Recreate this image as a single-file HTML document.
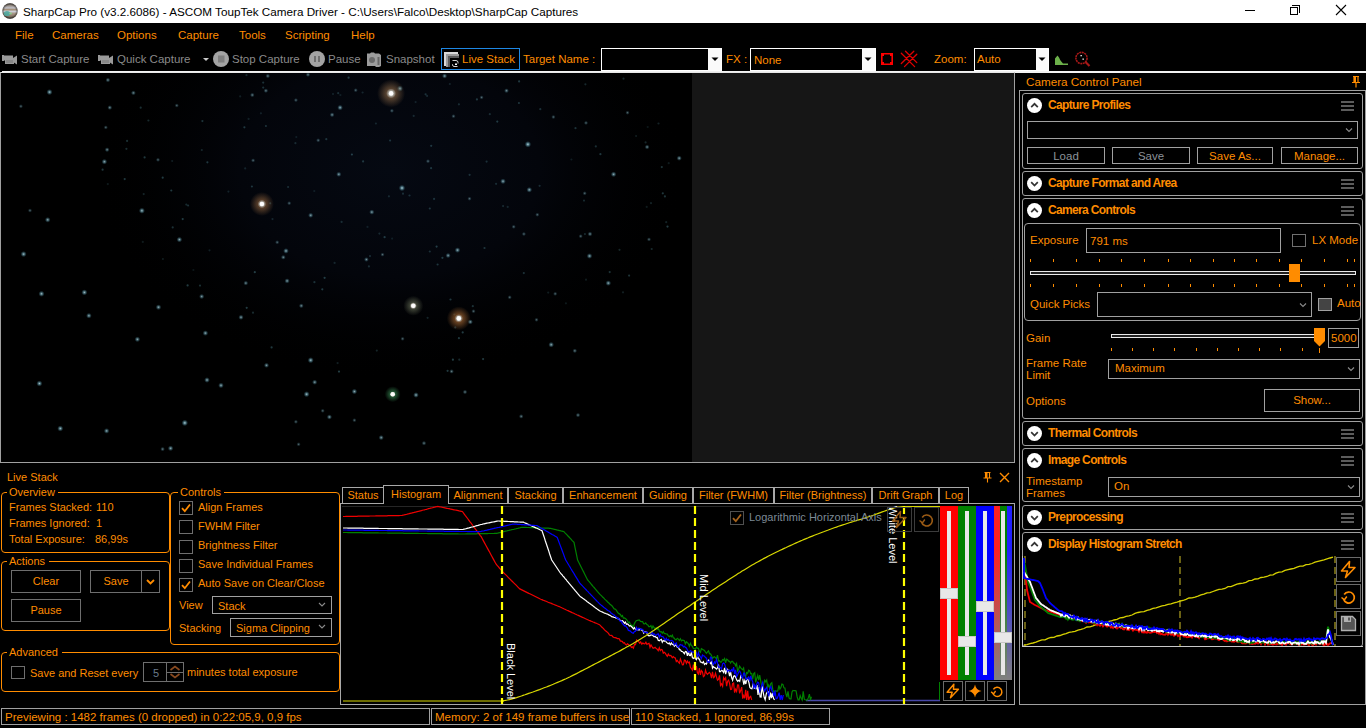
<!DOCTYPE html>
<html><head><meta charset="utf-8">
<style>
*{box-sizing:border-box;margin:0;padding:0}
html,body{width:1366px;height:728px;overflow:hidden;background:#000}
body{position:relative;font-family:"Liberation Sans",sans-serif;font-size:12px;color:#ff8c00}
.a{position:absolute}
.t{position:absolute;white-space:nowrap;line-height:14px;font-size:11.5px}
.g{color:#8a8a8a}
.bx{position:absolute;border:1px solid #a0a0a0}
.ob{position:absolute;border:1px solid #ff8c00;border-radius:4px}
.sec{position:absolute;border:1px solid #a0a0a0;border-radius:3px;left:1022px;width:341px}
.hd{position:absolute;font-weight:bold;font-size:12px;letter-spacing:-0.65px;line-height:14px;white-space:nowrap}
.circ{position:absolute;width:15px;height:15px;border-radius:50%;background:#fff}
.ham{position:absolute;width:13px;height:10px;border-top:2px solid #5c5c5c;border-bottom:2px solid #5c5c5c}
.ham:after{content:"";position:absolute;left:0;right:0;top:2px;height:2px;background:#5c5c5c}
.cb{position:absolute;width:14px;height:14px;border:1px solid #6e6e6e}
.btn{position:absolute;border:1px solid #a0a0a0;text-align:center;line-height:15px;font-size:11.5px}
.gbtn{position:absolute;border:1px solid #6e6e6e;text-align:center;font-size:12px}
.tab{position:absolute;top:487px;height:17px;border:1px solid #a0a0a0;border-bottom:none;text-align:center;line-height:15px;font-size:12px;white-space:nowrap}
</style></head>
<body>
<!-- title bar -->
<div class="a" style="left:0;top:0;width:1366px;height:23px;background:#fff"></div>
<svg class="a" style="left:2px;top:3px" width="16" height="16" viewBox="0 0 16 16"><defs><linearGradient id="jb" x1="0" y1="0" x2="0" y2="1"><stop offset="0" stop-color="#6a625a"/><stop offset="0.15" stop-color="#9a9088"/><stop offset="0.3" stop-color="#c0c0c8"/><stop offset="0.42" stop-color="#a08a70"/><stop offset="0.52" stop-color="#d0d4e0"/><stop offset="0.66" stop-color="#a89888"/><stop offset="0.8" stop-color="#908070"/><stop offset="1" stop-color="#5a5048"/></linearGradient><radialGradient id="je" cx="0.5" cy="0.5" r="0.5"><stop offset="0.7" stop-color="#000" stop-opacity="0"/><stop offset="1" stop-color="#000" stop-opacity="0.55"/></radialGradient></defs><circle cx="8" cy="8" r="7.7" fill="url(#jb)"/><circle cx="8" cy="8" r="7.7" fill="url(#je)"/><ellipse cx="5" cy="10.5" rx="3.2" ry="2.6" fill="#4aa8a0" opacity="0.85"/><ellipse cx="8.5" cy="10.5" rx="1.5" ry="1" fill="#8ad890" opacity="0.8"/></svg>
<div class="t" style="left:23px;top:5px;color:#000;font-size:11.7px">SharpCap Pro (v3.2.6086) - ASCOM ToupTek Camera Driver - C:\Users\Falco\Desktop\SharpCap Captures</div>
<div class="a" style="left:1245px;top:10px;width:10px;height:1px;background:#000"></div>
<div class="a" style="left:1292px;top:5px;width:8px;height:8px;border:1px solid #000;border-left:none;border-bottom:none"></div>
<div class="a" style="left:1290px;top:7px;width:8px;height:8px;border:1px solid #000;background:#fff"></div>
<svg class="a" style="left:1335px;top:4px" width="12" height="12"><path d="M1 1L11 11M11 1L1 11" stroke="#000" stroke-width="1.1"/></svg>

<!-- menu -->
<div class="t" style="left:15px;top:28px">File</div>
<div class="t" style="left:52px;top:28px">Cameras</div>
<div class="t" style="left:117px;top:28px">Options</div>
<div class="t" style="left:178px;top:28px">Capture</div>
<div class="t" style="left:239px;top:28px">Tools</div>
<div class="t" style="left:285px;top:28px">Scripting</div>
<div class="t" style="left:351px;top:28px">Help</div>

<!-- toolbar -->

<svg class="a" style="left:2px;top:54px" width="16" height="11" viewBox="0 0 16 11"><path d="M0 1h2v0.5h9v5h-9v0.5h-2z" fill="#9a9a9a"/><rect x="3" y="5" width="9" height="5" fill="#9a9a9a"/><rect x="4" y="6" width="7" height="3" fill="#888"/><path d="M11 4l4-2.5v9l-4-2.5z" fill="#9a9a9a"/></svg>
<div class="t g" style="left:21px;top:52px">Start Capture</div>
<svg class="a" style="left:98px;top:54px" width="16" height="11" viewBox="0 0 16 11"><path d="M0 1h2v0.5h9v5h-9v0.5h-2z" fill="#9a9a9a"/><rect x="3" y="5" width="9" height="5" fill="#9a9a9a"/><rect x="4" y="6" width="7" height="3" fill="#888"/><path d="M11 4l4-2.5v9l-4-2.5z" fill="#9a9a9a"/></svg>
<div class="t g" style="left:117px;top:52px">Quick Capture</div>
<svg class="a" style="left:202px;top:57px" width="8" height="5"><path d="M1 1h6l-3 3z" fill="#c8c8c8"/></svg>
<svg class="a" style="left:213px;top:51px" width="16" height="16"><circle cx="8" cy="8" r="8" fill="#a3a3a3"/><rect x="5" y="4.5" width="6.5" height="7" fill="#7e7e7e"/></svg>
<div class="t g" style="left:232px;top:52px">Stop Capture</div>
<svg class="a" style="left:309px;top:51px" width="16" height="16"><circle cx="8" cy="8" r="8" fill="#a3a3a3"/><rect x="5" y="5" width="2" height="6" fill="#6e6e6e"/><rect x="9" y="5" width="2" height="6" fill="#6e6e6e"/></svg>
<div class="t g" style="left:328px;top:52px">Pause</div>
<svg class="a" style="left:367px;top:52px" width="15" height="15" viewBox="0 0 15 15"><path d="M0 1.5h3l1-1h3l1 1h4l2 1.5v11l-2 1h-3l-1-1h-8z" fill="#9c9c9c"/><circle cx="5" cy="8" r="3" fill="#6a6a6a"/><rect x="10.5" y="5" width="2" height="8" fill="#666"/></svg>
<div class="t g" style="left:386px;top:52px">Snapshot</div>
<div class="a" style="left:441px;top:48px;width:79px;height:22px;border:1px solid #1e88e5"></div>
<svg class="a" style="left:444px;top:52px" width="16" height="16"><path d="M0 0h14v2h-12v12h-2z" fill="#d8d8d8"/><path d="M2 2h13v2h-11v11h-2z" fill="#9a9a9a"/><path d="M4 4h11v2h-9v9h-2z" fill="#5a5a5a"/><path d="M8.5 8.5H12Q14 8.5 14 10.5V11.5" stroke="#d0d0d0" fill="none" stroke-width="1"/><path d="M13.5 14.5H10Q8.5 14.5 8.5 12.5V12" stroke="#d0d0d0" fill="none" stroke-width="1"/><rect x="11" y="11.5" width="2" height="1.5" fill="#fff"/></svg>
<div class="t" style="left:462px;top:52px">Live Stack</div>
<div class="t" style="left:523px;top:52px">Target Name :</div>
<div class="a" style="left:601px;top:48px;width:121px;height:23px;background:#fafafa;border:1px solid #fff"></div>
<div class="a" style="left:602px;top:49px;width:106px;height:21px;background:#000"></div>
<svg class="a" style="left:711px;top:57px" width="9" height="5"><path d="M0.5 0.5h7l-3.5 3.5z" fill="#000"/></svg>
<div class="t" style="left:726px;top:52px">FX :</div>
<div class="a" style="left:750px;top:48px;width:126px;height:23px;background:#fafafa;border:1px solid #fff"></div>
<div class="a" style="left:751px;top:49px;width:111px;height:21px;background:#000"></div>
<div class="t" style="left:754px;top:53px">None</div>
<svg class="a" style="left:864px;top:57px" width="9" height="5"><path d="M0.5 0.5h7l-3.5 3.5z" fill="#000"/></svg>
<svg class="a" style="left:880px;top:52px" width="14" height="14" viewBox="0 0 14 14"><path d="M1.8 1.8h10.4v10.4h-10.4z" fill="none" stroke="#f00" stroke-width="1.6"/><rect x="2" y="2" width="2" height="2" fill="#f00"/><rect x="10" y="2" width="2" height="2" fill="#f00"/><rect x="2" y="10" width="2" height="2" fill="#f00"/><rect x="10" y="10" width="2" height="2" fill="#f00"/></svg>
<svg class="a" style="left:899px;top:50px" width="20" height="18" viewBox="899 50 20 18"><path d="M901.3 53.3L914.6 66.6M905.5 51.3L916.8 62.6M913.8 51.3L901.3 63.5M916.8 54.3L904.5 66.6" stroke="#e00000" stroke-width="1.3" stroke-linecap="round"/></svg>
<div class="t" style="left:934px;top:52px">Zoom:</div>
<div class="a" style="left:974px;top:48px;width:75px;height:23px;background:#fafafa;border:1px solid #fff"></div>
<div class="a" style="left:975px;top:49px;width:61px;height:21px;background:#000"></div>
<div class="t" style="left:977px;top:52px">Auto</div>
<svg class="a" style="left:1038px;top:57px" width="9" height="5"><path d="M0.5 0.5h7l-3.5 3.5z" fill="#000"/></svg>
<svg class="a" style="left:1054px;top:54px" width="15" height="12" viewBox="0 0 15 12"><path d="M1 11V4.5L3.5 1.5L5 3.5L6.5 6.5L9 9.5H14V11z" fill="#6cb04a"/></svg>
<svg class="a" style="left:1074px;top:51px" width="18" height="17" viewBox="0 0 18 17"><circle cx="7.5" cy="7" r="5.6" fill="none" stroke="#a81818" stroke-width="1.6" stroke-dasharray="2 0.6"/><path d="M11.5 11L15.5 15" stroke="#a81818" stroke-width="2.2"/><rect x="6.5" y="4" width="1.3" height="1.3" fill="#fff"/><rect x="8.5" y="7.5" width="1.3" height="1.3" fill="#fff"/></svg>


<!-- white line -->
<div class="a" style="left:2px;top:71px;width:1364px;height:2px;background:#f2f2f2"></div>

<!-- image area -->
<div class="a" style="left:0;top:72px;width:1015px;height:391px;border-top:1px solid #e8e8e8;border-left:1px solid #a0a0a0;border-right:1px solid #a0a0a0;border-bottom:1px solid #a0a0a0;background:#161616"></div>
<svg class="a" style="left:1px;top:73px" width="691" height="389" viewBox="1 73 691 389"><defs><radialGradient id="hz"><stop offset="0" stop-color="#050912"/><stop offset="0.5" stop-color="#03050b"/><stop offset="1" stop-color="#000" stop-opacity="0"/></radialGradient><radialGradient id="h0"><stop offset="0" stop-color="#fff" stop-opacity="1"/><stop offset="0.2" stop-color="#e8e0d0" stop-opacity="0.7"/><stop offset="0.35" stop-color="#6a5038" stop-opacity="0.8"/><stop offset="0.7" stop-color="#6a5038" stop-opacity="0.35"/><stop offset="1" stop-color="#6a5038" stop-opacity="0"/></radialGradient><radialGradient id="h1"><stop offset="0" stop-color="#fff" stop-opacity="1"/><stop offset="0.2" stop-color="#e8e0d0" stop-opacity="0.7"/><stop offset="0.35" stop-color="#6a4a30" stop-opacity="0.8"/><stop offset="0.7" stop-color="#6a4a30" stop-opacity="0.35"/><stop offset="1" stop-color="#6a4a30" stop-opacity="0"/></radialGradient><radialGradient id="h2"><stop offset="0" stop-color="#fff" stop-opacity="1"/><stop offset="0.2" stop-color="#e8e0d0" stop-opacity="0.7"/><stop offset="0.35" stop-color="#4a5040" stop-opacity="0.8"/><stop offset="0.7" stop-color="#4a5040" stop-opacity="0.35"/><stop offset="1" stop-color="#4a5040" stop-opacity="0"/></radialGradient><radialGradient id="h3"><stop offset="0" stop-color="#fff" stop-opacity="1"/><stop offset="0.2" stop-color="#e8e0d0" stop-opacity="0.7"/><stop offset="0.35" stop-color="#805028" stop-opacity="0.8"/><stop offset="0.7" stop-color="#805028" stop-opacity="0.35"/><stop offset="1" stop-color="#805028" stop-opacity="0"/></radialGradient><radialGradient id="h4"><stop offset="0" stop-color="#fff" stop-opacity="1"/><stop offset="0.2" stop-color="#e8e0d0" stop-opacity="0.7"/><stop offset="0.35" stop-color="#2a6a40" stop-opacity="0.8"/><stop offset="0.7" stop-color="#2a6a40" stop-opacity="0.35"/><stop offset="1" stop-color="#2a6a40" stop-opacity="0"/></radialGradient><radialGradient id="st"><stop offset="0" stop-color="#c8e8f0"/><stop offset="0.4" stop-color="#70a8b8" stop-opacity="0.7"/><stop offset="1" stop-color="#306878" stop-opacity="0"/></radialGradient></defs><rect x="1" y="72" width="691" height="390" fill="#000"/><ellipse cx="390" cy="170" rx="300" ry="215" fill="url(#hz)"/><circle cx="182.7" cy="219.1" r="1.1" fill="#5a9aa8" opacity="0.38"/><circle cx="188.1" cy="205.5" r="1.1" fill="#5a9aa8" opacity="0.30"/><circle cx="472.8" cy="306.2" r="1.1" fill="#5a9aa8" opacity="0.31"/><circle cx="413.7" cy="115.9" r="1.1" fill="#5a9aa8" opacity="0.23"/><circle cx="609.7" cy="272.1" r="1.1" fill="#5a9aa8" opacity="0.32"/><circle cx="667.5" cy="226.6" r="1.1" fill="#5a9aa8" opacity="0.39"/><circle cx="409.5" cy="195.5" r="1.1" fill="#5a9aa8" opacity="0.28"/><circle cx="507.7" cy="206.9" r="1.1" fill="#5a9aa8" opacity="0.21"/><circle cx="584.0" cy="200.6" r="1.1" fill="#5a9aa8" opacity="0.26"/><circle cx="339.0" cy="371.6" r="1.1" fill="#5a9aa8" opacity="0.40"/><circle cx="334.6" cy="262.9" r="1.1" fill="#5a9aa8" opacity="0.22"/><circle cx="619.5" cy="249.8" r="1.1" fill="#5a9aa8" opacity="0.25"/><circle cx="647.7" cy="127.0" r="1.1" fill="#5a9aa8" opacity="0.15"/><circle cx="459.3" cy="359.7" r="1.1" fill="#5a9aa8" opacity="0.27"/><circle cx="571.4" cy="159.5" r="1.1" fill="#5a9aa8" opacity="0.17"/><circle cx="379.4" cy="233.6" r="1.1" fill="#5a9aa8" opacity="0.23"/><circle cx="636.1" cy="136.0" r="1.1" fill="#5a9aa8" opacity="0.18"/><circle cx="392.1" cy="238.6" r="1.1" fill="#5a9aa8" opacity="0.16"/><circle cx="425.6" cy="94.3" r="1.1" fill="#5a9aa8" opacity="0.29"/><circle cx="270.2" cy="203.3" r="1.1" fill="#5a9aa8" opacity="0.33"/><circle cx="548.2" cy="292.6" r="1.1" fill="#5a9aa8" opacity="0.18"/><circle cx="272.5" cy="219.1" r="1.1" fill="#5a9aa8" opacity="0.22"/><circle cx="645.6" cy="142.4" r="1.1" fill="#5a9aa8" opacity="0.23"/><circle cx="489.8" cy="114.2" r="1.1" fill="#5a9aa8" opacity="0.25"/><circle cx="623.0" cy="292.3" r="1.1" fill="#5a9aa8" opacity="0.20"/><circle cx="376.8" cy="350.6" r="1.1" fill="#5a9aa8" opacity="0.23"/><circle cx="367.5" cy="226.9" r="1.1" fill="#5a9aa8" opacity="0.17"/><circle cx="265.9" cy="126.0" r="1.1" fill="#5a9aa8" opacity="0.30"/><circle cx="254.8" cy="272.2" r="1.1" fill="#5a9aa8" opacity="0.39"/><circle cx="171.3" cy="190.5" r="1.1" fill="#5a9aa8" opacity="0.37"/><circle cx="436.6" cy="246.6" r="1.1" fill="#5a9aa8" opacity="0.38"/><circle cx="449.8" cy="84.0" r="1.1" fill="#5a9aa8" opacity="0.20"/><circle cx="483.1" cy="359.1" r="1.1" fill="#5a9aa8" opacity="0.37"/><circle cx="240.2" cy="96.4" r="1.1" fill="#5a9aa8" opacity="0.18"/><circle cx="666.2" cy="222.2" r="1.1" fill="#5a9aa8" opacity="0.21"/><circle cx="348.6" cy="77.7" r="1.1" fill="#5a9aa8" opacity="0.36"/><circle cx="260.9" cy="113.3" r="1.1" fill="#5a9aa8" opacity="0.19"/><circle cx="375.9" cy="123.5" r="1.1" fill="#5a9aa8" opacity="0.21"/><circle cx="140.7" cy="107.7" r="1.1" fill="#5a9aa8" opacity="0.30"/><circle cx="337.6" cy="363.1" r="1.1" fill="#5a9aa8" opacity="0.20"/><circle cx="539.6" cy="185.8" r="1.1" fill="#5a9aa8" opacity="0.26"/><circle cx="503.1" cy="206.1" r="1.1" fill="#5a9aa8" opacity="0.24"/><circle cx="295.4" cy="143.2" r="1.1" fill="#5a9aa8" opacity="0.24"/><circle cx="296.3" cy="137.1" r="1.1" fill="#5a9aa8" opacity="0.16"/><circle cx="664.9" cy="196.4" r="1.1" fill="#5a9aa8" opacity="0.33"/><circle cx="431.1" cy="168.2" r="1.1" fill="#5a9aa8" opacity="0.31"/><circle cx="143.7" cy="194.1" r="1.1" fill="#5a9aa8" opacity="0.23"/><circle cx="469.6" cy="174.8" r="1.1" fill="#5a9aa8" opacity="0.29"/><circle cx="246.7" cy="307.8" r="1.1" fill="#5a9aa8" opacity="0.38"/><circle cx="519.1" cy="81.4" r="1.1" fill="#5a9aa8" opacity="0.35"/><circle cx="263.2" cy="87.6" r="1.1" fill="#5a9aa8" opacity="0.30"/><circle cx="326.3" cy="139.2" r="1.1" fill="#5a9aa8" opacity="0.31"/><circle cx="661.8" cy="167.1" r="1.1" fill="#5a9aa8" opacity="0.33"/><circle cx="200.0" cy="285.6" r="1.1" fill="#5a9aa8" opacity="0.30"/><circle cx="142.8" cy="241.9" r="1.1" fill="#5a9aa8" opacity="0.17"/><circle cx="390.1" cy="140.5" r="1.1" fill="#5a9aa8" opacity="0.30"/><circle cx="251.9" cy="186.5" r="1.1" fill="#5a9aa8" opacity="0.32"/><circle cx="162.7" cy="177.7" r="1.1" fill="#5a9aa8" opacity="0.38"/><circle cx="388.9" cy="196.3" r="1.1" fill="#5a9aa8" opacity="0.23"/><circle cx="333.0" cy="94.0" r="1.1" fill="#5a9aa8" opacity="0.19"/><circle cx="585.4" cy="84.3" r="1.1" fill="#5a9aa8" opacity="0.26"/><circle cx="518.9" cy="103.0" r="1.1" fill="#5a9aa8" opacity="0.32"/><circle cx="450.5" cy="299.5" r="1.1" fill="#5a9aa8" opacity="0.35"/><circle cx="623.5" cy="78.7" r="1.1" fill="#5a9aa8" opacity="0.25"/><circle cx="248.6" cy="118.9" r="1.1" fill="#5a9aa8" opacity="0.18"/><circle cx="124.7" cy="179.1" r="1.1" fill="#5a9aa8" opacity="0.36"/><circle cx="370.0" cy="256.1" r="1.1" fill="#5a9aa8" opacity="0.26"/><circle cx="368.9" cy="266.4" r="1.1" fill="#5a9aa8" opacity="0.25"/><circle cx="246.5" cy="75.2" r="1.1" fill="#5a9aa8" opacity="0.23"/><circle cx="314.3" cy="191.1" r="1.1" fill="#5a9aa8" opacity="0.16"/><circle cx="431.2" cy="145.8" r="1.1" fill="#5a9aa8" opacity="0.33"/><circle cx="244.4" cy="127.3" r="1.1" fill="#5a9aa8" opacity="0.35"/><circle cx="496.1" cy="183.8" r="1.1" fill="#5a9aa8" opacity="0.26"/><circle cx="651.0" cy="203.2" r="1.1" fill="#5a9aa8" opacity="0.21"/><circle cx="429.8" cy="208.5" r="1.1" fill="#5a9aa8" opacity="0.31"/><circle cx="172.7" cy="227.4" r="1.1" fill="#5a9aa8" opacity="0.31"/><circle cx="338.2" cy="93.2" r="1.1" fill="#5a9aa8" opacity="0.27"/><circle cx="403.0" cy="193.7" r="1.1" fill="#5a9aa8" opacity="0.27"/><circle cx="362.6" cy="92.5" r="1.1" fill="#5a9aa8" opacity="0.22"/><circle cx="253.0" cy="312.7" r="1.1" fill="#5a9aa8" opacity="0.28"/><circle cx="187.6" cy="285.4" r="1.1" fill="#5a9aa8" opacity="0.38"/><circle cx="629.1" cy="275.6" r="1.1" fill="#5a9aa8" opacity="0.33"/><circle cx="523.8" cy="273.1" r="1.1" fill="#5a9aa8" opacity="0.31"/><circle cx="540.3" cy="109.2" r="1.1" fill="#5a9aa8" opacity="0.29"/><circle cx="575.5" cy="128.2" r="1.1" fill="#5a9aa8" opacity="0.31"/><circle cx="458.9" cy="338.2" r="1.1" fill="#5a9aa8" opacity="0.35"/><circle cx="452.9" cy="359.7" r="1.1" fill="#5a9aa8" opacity="0.40"/><circle cx="600.4" cy="154.2" r="1.1" fill="#5a9aa8" opacity="0.35"/><circle cx="271.6" cy="347.4" r="1.1" fill="#5a9aa8" opacity="0.36"/><circle cx="341.6" cy="221.9" r="1.1" fill="#5a9aa8" opacity="0.26"/><circle cx="148.4" cy="120.5" r="1.1" fill="#5a9aa8" opacity="0.27"/><circle cx="646.7" cy="206.9" r="1.1" fill="#5a9aa8" opacity="0.17"/><circle cx="427.1" cy="95.9" r="1.1" fill="#5a9aa8" opacity="0.23"/><circle cx="415.6" cy="102.1" r="1.1" fill="#5a9aa8" opacity="0.19"/><circle cx="144.6" cy="157.4" r="1.1" fill="#5a9aa8" opacity="0.36"/><circle cx="107.8" cy="184.1" r="1.1" fill="#5a9aa8" opacity="0.17"/><circle cx="427.6" cy="317.8" r="1.1" fill="#5a9aa8" opacity="0.22"/><circle cx="126.4" cy="148.8" r="1.1" fill="#5a9aa8" opacity="0.29"/><circle cx="322.3" cy="289.3" r="1.1" fill="#5a9aa8" opacity="0.36"/><circle cx="497.3" cy="121.6" r="1.1" fill="#5a9aa8" opacity="0.36"/><circle cx="595.8" cy="146.4" r="1.1" fill="#5a9aa8" opacity="0.29"/><circle cx="454.4" cy="314.5" r="1.1" fill="#5a9aa8" opacity="0.28"/><circle cx="351.9" cy="154.5" r="1.1" fill="#5a9aa8" opacity="0.39"/><circle cx="207.4" cy="162.3" r="1.1" fill="#5a9aa8" opacity="0.35"/><circle cx="202.4" cy="121.1" r="1.1" fill="#5a9aa8" opacity="0.32"/><circle cx="584.9" cy="234.1" r="1.1" fill="#5a9aa8" opacity="0.25"/><circle cx="658.5" cy="123.5" r="1.1" fill="#5a9aa8" opacity="0.22"/><circle cx="288.1" cy="187.0" r="1.1" fill="#5a9aa8" opacity="0.26"/><circle cx="228.4" cy="191.6" r="1.1" fill="#5a9aa8" opacity="0.20"/><circle cx="565.9" cy="303.3" r="1.1" fill="#5a9aa8" opacity="0.16"/><circle cx="437.6" cy="264.5" r="1.1" fill="#5a9aa8" opacity="0.32"/><circle cx="314.4" cy="282.2" r="1.1" fill="#5a9aa8" opacity="0.30"/><circle cx="586.0" cy="279.7" r="1.1" fill="#5a9aa8" opacity="0.18"/><circle cx="245.2" cy="168.4" r="1.1" fill="#5a9aa8" opacity="0.20"/><circle cx="201.8" cy="150.0" r="1.1" fill="#5a9aa8" opacity="0.24"/><circle cx="209.5" cy="250.3" r="1.1" fill="#5a9aa8" opacity="0.19"/><circle cx="455.3" cy="327.4" r="1.1" fill="#5a9aa8" opacity="0.31"/><circle cx="127.1" cy="140.9" r="1.1" fill="#5a9aa8" opacity="0.30"/><circle cx="476.9" cy="99.4" r="1.1" fill="#5a9aa8" opacity="0.34"/><circle cx="324.6" cy="277.8" r="1.1" fill="#5a9aa8" opacity="0.38"/><circle cx="447.6" cy="370.8" r="1.1" fill="#5a9aa8" opacity="0.37"/><circle cx="484.5" cy="248.0" r="1.1" fill="#5a9aa8" opacity="0.33"/><circle cx="384.6" cy="237.2" r="1.1" fill="#5a9aa8" opacity="0.36"/><circle cx="162.9" cy="259.0" r="1.1" fill="#5a9aa8" opacity="0.18"/><circle cx="193.4" cy="270.0" r="1.1" fill="#5a9aa8" opacity="0.15"/><circle cx="462.7" cy="332.4" r="1.1" fill="#5a9aa8" opacity="0.38"/><circle cx="486.6" cy="161.6" r="1.1" fill="#5a9aa8" opacity="0.28"/><circle cx="340.4" cy="95.1" r="1.1" fill="#5a9aa8" opacity="0.17"/><circle cx="434.1" cy="198.9" r="1.1" fill="#5a9aa8" opacity="0.29"/><circle cx="172.2" cy="161.0" r="1.1" fill="#5a9aa8" opacity="0.19"/><circle cx="442.4" cy="257.8" r="1.1" fill="#5a9aa8" opacity="0.36"/><circle cx="668.7" cy="163.2" r="1.1" fill="#5a9aa8" opacity="0.17"/><circle cx="651.7" cy="249.0" r="1.1" fill="#5a9aa8" opacity="0.27"/><circle cx="186.3" cy="204.6" r="1.1" fill="#5a9aa8" opacity="0.26"/><circle cx="363.1" cy="161.4" r="1.1" fill="#5a9aa8" opacity="0.33"/><circle cx="458.9" cy="104.3" r="1.1" fill="#5a9aa8" opacity="0.26"/><circle cx="429.8" cy="251.5" r="1.1" fill="#5a9aa8" opacity="0.28"/><circle cx="662.8" cy="193.3" r="1.1" fill="#5a9aa8" opacity="0.35"/><circle cx="263.2" cy="82.6" r="1.1" fill="#5a9aa8" opacity="0.30"/><circle cx="102.6" cy="169.7" r="1.1" fill="#5a9aa8" opacity="0.35"/><circle cx="49.5" cy="92.1" r="3.1" fill="url(#st)" opacity="0.85"/><circle cx="107.9" cy="80" r="2.5" fill="url(#st)" opacity="0.62"/><circle cx="133.4" cy="92.9" r="2.5" fill="url(#st)" opacity="0.62"/><circle cx="20.9" cy="106.3" r="2.2" fill="url(#st)" opacity="0.47"/><circle cx="109.8" cy="107.6" r="2.5" fill="url(#st)" opacity="0.62"/><circle cx="105.8" cy="127.4" r="2.2" fill="url(#st)" opacity="0.47"/><circle cx="107.1" cy="149.7" r="2.5" fill="url(#st)" opacity="0.62"/><circle cx="104.4" cy="161.7" r="2.9" fill="url(#st)" opacity="0.77"/><circle cx="141.9" cy="210.7" r="3.1" fill="url(#st)" opacity="0.85"/><circle cx="47.7" cy="219.8" r="2.9" fill="url(#st)" opacity="0.77"/><circle cx="30" cy="210.5" r="2.2" fill="url(#st)" opacity="0.47"/><circle cx="23.6" cy="254.1" r="3.1" fill="url(#st)" opacity="0.85"/><circle cx="179.4" cy="239.6" r="2.9" fill="url(#st)" opacity="0.77"/><circle cx="340.1" cy="107.6" r="2.9" fill="url(#st)" opacity="0.77"/><circle cx="332.1" cy="114.8" r="2.5" fill="url(#st)" opacity="0.62"/><circle cx="338.8" cy="174.3" r="2.7" fill="url(#st)" opacity="0.70"/><circle cx="310.7" cy="215.3" r="2.7" fill="url(#st)" opacity="0.70"/><circle cx="286" cy="250.9" r="2.9" fill="url(#st)" opacity="0.77"/><circle cx="283.3" cy="257.3" r="2.5" fill="url(#st)" opacity="0.62"/><circle cx="277.2" cy="242.3" r="2.2" fill="url(#st)" opacity="0.47"/><circle cx="252.3" cy="95" r="2.4" fill="url(#st)" opacity="0.55"/><circle cx="265.9" cy="90.7" r="2.4" fill="url(#st)" opacity="0.55"/><circle cx="253.1" cy="160.4" r="2.2" fill="url(#st)" opacity="0.47"/><circle cx="295.9" cy="100.1" r="2.2" fill="url(#st)" opacity="0.47"/><circle cx="318.2" cy="140.3" r="2.2" fill="url(#st)" opacity="0.47"/><circle cx="176.8" cy="105.5" r="2.2" fill="url(#st)" opacity="0.47"/><circle cx="158" cy="159.8" r="2.2" fill="url(#st)" opacity="0.47"/><circle cx="289.2" cy="203.2" r="2.2" fill="url(#st)" opacity="0.47"/><circle cx="267.8" cy="76" r="2.4" fill="url(#st)" opacity="0.55"/><circle cx="308" cy="74.7" r="2.4" fill="url(#st)" opacity="0.55"/><circle cx="399.9" cy="88.6" r="3.1" fill="url(#st)" opacity="0.85"/><circle cx="444.6" cy="76" r="2.7" fill="url(#st)" opacity="0.70"/><circle cx="355.7" cy="90.2" r="2.2" fill="url(#st)" opacity="0.47"/><circle cx="391.9" cy="110.8" r="2.2" fill="url(#st)" opacity="0.47"/><circle cx="506.5" cy="90.7" r="2.5" fill="url(#st)" opacity="0.62"/><circle cx="481.6" cy="97.4" r="2.2" fill="url(#st)" opacity="0.47"/><circle cx="527.9" cy="144.3" r="3.3" fill="url(#st)" opacity="0.93"/><circle cx="402" cy="188" r="3.3" fill="url(#st)" opacity="0.93"/><circle cx="503" cy="181.3" r="2.9" fill="url(#st)" opacity="0.77"/><circle cx="529.3" cy="189.8" r="2.9" fill="url(#st)" opacity="0.77"/><circle cx="613.6" cy="174.3" r="2.9" fill="url(#st)" opacity="0.77"/><circle cx="647.1" cy="147" r="2.5" fill="url(#st)" opacity="0.62"/><circle cx="679.2" cy="158.2" r="2.7" fill="url(#st)" opacity="0.70"/><circle cx="371.8" cy="212.1" r="2.7" fill="url(#st)" opacity="0.70"/><circle cx="457.5" cy="250.1" r="2.9" fill="url(#st)" opacity="0.77"/><circle cx="448.1" cy="255.5" r="2.7" fill="url(#st)" opacity="0.70"/><circle cx="366.4" cy="259.5" r="2.5" fill="url(#st)" opacity="0.62"/><circle cx="382.5" cy="254.6" r="2.2" fill="url(#st)" opacity="0.47"/><circle cx="589.5" cy="256" r="2.9" fill="url(#st)" opacity="0.77"/><circle cx="590" cy="234" r="2.5" fill="url(#st)" opacity="0.62"/><circle cx="580.7" cy="236.2" r="2.2" fill="url(#st)" opacity="0.47"/><circle cx="537.3" cy="214.7" r="2.2" fill="url(#st)" opacity="0.47"/><circle cx="584.7" cy="193.3" r="2.2" fill="url(#st)" opacity="0.47"/><circle cx="469.5" cy="198.7" r="2.2" fill="url(#st)" opacity="0.47"/><circle cx="428" cy="161.2" r="2.2" fill="url(#st)" opacity="0.47"/><circle cx="453.5" cy="116.2" r="2.2" fill="url(#st)" opacity="0.47"/><circle cx="553.4" cy="117" r="2.2" fill="url(#st)" opacity="0.47"/><circle cx="586" cy="122.9" r="2.2" fill="url(#st)" opacity="0.47"/><circle cx="649" cy="239.4" r="2.2" fill="url(#st)" opacity="0.47"/><circle cx="627.5" cy="112.7" r="2.2" fill="url(#st)" opacity="0.47"/><circle cx="523.9" cy="234" r="2.2" fill="url(#st)" opacity="0.47"/><circle cx="513.7" cy="226.8" r="2.2" fill="url(#st)" opacity="0.47"/><circle cx="41.5" cy="293.8" r="3.1" fill="url(#st)" opacity="0.85"/><circle cx="84.4" cy="292.4" r="3.1" fill="url(#st)" opacity="0.85"/><circle cx="88.9" cy="315.7" r="2.9" fill="url(#st)" opacity="0.77"/><circle cx="158.5" cy="307.2" r="2.9" fill="url(#st)" opacity="0.77"/><circle cx="137.4" cy="339.3" r="2.9" fill="url(#st)" opacity="0.77"/><circle cx="201.7" cy="296.5" r="2.7" fill="url(#st)" opacity="0.70"/><circle cx="205.4" cy="333.1" r="2.9" fill="url(#st)" opacity="0.77"/><circle cx="241" cy="317.3" r="2.7" fill="url(#st)" opacity="0.70"/><circle cx="245.8" cy="283.1" r="2.5" fill="url(#st)" opacity="0.62"/><circle cx="287.1" cy="280.9" r="2.7" fill="url(#st)" opacity="0.70"/><circle cx="301.3" cy="305.8" r="2.5" fill="url(#st)" opacity="0.62"/><circle cx="39.4" cy="383.5" r="3.1" fill="url(#st)" opacity="0.85"/><circle cx="207" cy="380" r="2.9" fill="url(#st)" opacity="0.77"/><circle cx="221" cy="385.4" r="2.9" fill="url(#st)" opacity="0.77"/><circle cx="266.5" cy="365.3" r="2.7" fill="url(#st)" opacity="0.70"/><circle cx="310.7" cy="360.2" r="3.1" fill="url(#st)" opacity="0.85"/><circle cx="314.7" cy="382.2" r="2.7" fill="url(#st)" opacity="0.70"/><circle cx="306.6" cy="394.2" r="3.1" fill="url(#st)" opacity="0.85"/><circle cx="329.4" cy="417" r="2.7" fill="url(#st)" opacity="0.70"/><circle cx="322.7" cy="410.8" r="2.2" fill="url(#st)" opacity="0.47"/><circle cx="295.9" cy="421.8" r="2.2" fill="url(#st)" opacity="0.47"/><circle cx="184.8" cy="422.9" r="3.3" fill="url(#st)" opacity="0.93"/><circle cx="60.3" cy="428.5" r="3.1" fill="url(#st)" opacity="0.85"/><circle cx="106.6" cy="430.9" r="2.9" fill="url(#st)" opacity="0.77"/><circle cx="170.6" cy="448.3" r="2.9" fill="url(#st)" opacity="0.77"/><circle cx="162.6" cy="449.1" r="2.4" fill="url(#st)" opacity="0.55"/><circle cx="298.6" cy="444.3" r="2.2" fill="url(#st)" opacity="0.47"/><circle cx="470.3" cy="321.9" r="2.7" fill="url(#st)" opacity="0.70"/><circle cx="473.5" cy="311.2" r="2.2" fill="url(#st)" opacity="0.47"/><circle cx="608.3" cy="283.1" r="2.9" fill="url(#st)" opacity="0.77"/><circle cx="551.2" cy="344.7" r="2.9" fill="url(#st)" opacity="0.77"/><circle cx="574.8" cy="350.8" r="2.4" fill="url(#st)" opacity="0.55"/><circle cx="354.4" cy="391.5" r="2.9" fill="url(#st)" opacity="0.77"/><circle cx="416" cy="395" r="2.9" fill="url(#st)" opacity="0.77"/><circle cx="451.6" cy="371.4" r="2.4" fill="url(#st)" opacity="0.55"/><circle cx="465" cy="392" r="2.4" fill="url(#st)" opacity="0.55"/><circle cx="402.6" cy="338.8" r="2.2" fill="url(#st)" opacity="0.47"/><circle cx="521.2" cy="416.4" r="2.4" fill="url(#st)" opacity="0.55"/><circle cx="578" cy="415.1" r="2.4" fill="url(#st)" opacity="0.55"/><circle cx="381.2" cy="437.6" r="2.7" fill="url(#st)" opacity="0.70"/><circle cx="424" cy="443.2" r="2.4" fill="url(#st)" opacity="0.55"/><circle cx="354.4" cy="420.2" r="2.2" fill="url(#st)" opacity="0.47"/><circle cx="555.2" cy="293.8" r="2.2" fill="url(#st)" opacity="0.47"/><circle cx="536.5" cy="319.8" r="2.2" fill="url(#st)" opacity="0.47"/><circle cx="509.7" cy="297.3" r="2.2" fill="url(#st)" opacity="0.47"/><circle cx="391.1" cy="93.4" r="14" fill="url(#h0)"/><circle cx="391.1" cy="93.4" r="2.3" fill="#fff" opacity="0.95"/><circle cx="261.9" cy="204" r="12" fill="url(#h1)"/><circle cx="261.9" cy="204" r="2.3" fill="#fff" opacity="0.95"/><circle cx="413.3" cy="305.8" r="10" fill="url(#h2)"/><circle cx="413.3" cy="305.8" r="2.3" fill="#fff" opacity="0.95"/><circle cx="458.8" cy="318.4" r="12" fill="url(#h3)"/><circle cx="458.8" cy="318.4" r="2.3" fill="#fff" opacity="0.95"/><circle cx="392.7" cy="394.2" r="8" fill="url(#h4)"/><circle cx="392.7" cy="394.2" r="2.3" fill="#fff" opacity="0.95"/></svg>

<!-- right panel -->
<div class="t" style="left:1026px;top:75px;font-size:11.7px">Camera Control Panel</div>
<svg class="a" style="left:1351px;top:76px" width="10" height="12" viewBox="0 0 10 12"><path d="M2 0.5h6M3 0.5v6M7 0.5v6M1 6.5h8M5 6.5v5" stroke="#ff8c00" stroke-width="1.2" fill="none"/><rect x="3" y="1" width="2" height="5" fill="#ff8c00"/></svg>
<div class="bx" style="left:1019px;top:90px;width:347px;height:615px"></div>
<div class="sec" style="top:93px;height:76px"></div>
<svg class="a" style="left:1027px;top:97.8px" width="15" height="15" viewBox="0 0 15 15"><circle cx="7.5" cy="7.5" r="7.5" fill="#fff"/><path d="M4.2 9.2L7.5 5.8L10.8 9.2" stroke="#333" stroke-width="1.7" fill="none"/></svg>
<div class="hd" style="left:1048px;top:98px">Capture Profiles</div>
<div class="ham" style="left:1341px;top:101px"></div>
<div class="sec" style="top:171px;height:25px"></div>
<svg class="a" style="left:1027px;top:175.8px" width="15" height="15" viewBox="0 0 15 15"><circle cx="7.5" cy="7.5" r="7.5" fill="#fff"/><path d="M4.2 6.2L7.5 9.6L10.8 6.2" stroke="#333" stroke-width="1.7" fill="none"/></svg>
<div class="hd" style="left:1048px;top:176px">Capture Format and Area</div>
<div class="ham" style="left:1341px;top:179px"></div>
<div class="sec" style="top:198px;height:221px"></div>
<svg class="a" style="left:1027px;top:202.8px" width="15" height="15" viewBox="0 0 15 15"><circle cx="7.5" cy="7.5" r="7.5" fill="#fff"/><path d="M4.2 9.2L7.5 5.8L10.8 9.2" stroke="#333" stroke-width="1.7" fill="none"/></svg>
<div class="hd" style="left:1048px;top:203px">Camera Controls</div>
<div class="ham" style="left:1341px;top:206px"></div>
<div class="sec" style="top:421px;height:25px"></div>
<svg class="a" style="left:1027px;top:425.8px" width="15" height="15" viewBox="0 0 15 15"><circle cx="7.5" cy="7.5" r="7.5" fill="#fff"/><path d="M4.2 6.2L7.5 9.6L10.8 6.2" stroke="#333" stroke-width="1.7" fill="none"/></svg>
<div class="hd" style="left:1048px;top:426px">Thermal Controls</div>
<div class="ham" style="left:1341px;top:429px"></div>
<div class="sec" style="top:448px;height:54px"></div>
<svg class="a" style="left:1027px;top:452.8px" width="15" height="15" viewBox="0 0 15 15"><circle cx="7.5" cy="7.5" r="7.5" fill="#fff"/><path d="M4.2 9.2L7.5 5.8L10.8 9.2" stroke="#333" stroke-width="1.7" fill="none"/></svg>
<div class="hd" style="left:1048px;top:453px">Image Controls</div>
<div class="ham" style="left:1341px;top:456px"></div>
<div class="sec" style="top:505px;height:25px"></div>
<svg class="a" style="left:1027px;top:509.8px" width="15" height="15" viewBox="0 0 15 15"><circle cx="7.5" cy="7.5" r="7.5" fill="#fff"/><path d="M4.2 6.2L7.5 9.6L10.8 6.2" stroke="#333" stroke-width="1.7" fill="none"/></svg>
<div class="hd" style="left:1048px;top:510px">Preprocessing</div>
<div class="ham" style="left:1341px;top:513px"></div>
<div class="sec" style="top:532px;height:115px"></div>
<svg class="a" style="left:1027px;top:536.8px" width="15" height="15" viewBox="0 0 15 15"><circle cx="7.5" cy="7.5" r="7.5" fill="#fff"/><path d="M4.2 9.2L7.5 5.8L10.8 9.2" stroke="#333" stroke-width="1.7" fill="none"/></svg>
<div class="hd" style="left:1048px;top:537px">Display Histogram Stretch</div>
<div class="ham" style="left:1341px;top:540px"></div>
<div class="bx" style="left:1027px;top:121px;width:331px;height:18px"></div>
<svg class="a" style="left:1345px;top:127.0px" width="9" height="6"><path d="M1 1.5L4 4.5L7 1.5" stroke="#8a8a8a" stroke-width="1.1" fill="none"/></svg>
<div class="btn" style="left:1027px;top:147px;width:78px;height:17px;line-height:16px;color:#8b9299;">Load</div>
<div class="btn" style="left:1112px;top:147px;width:78px;height:17px;line-height:16px;color:#8b9299;">Save</div>
<div class="btn" style="left:1197px;top:147px;width:76px;height:17px;line-height:16px;">Save As...</div>
<div class="btn" style="left:1281px;top:147px;width:77px;height:17px;line-height:16px;">Manage...</div>
<div class="bx" style="left:1024px;top:223px;width:337px;height:98px;border-radius:4px"></div>
<div class="t" style="left:1030px;top:233px;">Exposure</div>
<div class="bx" style="left:1086px;top:228px;width:195px;height:25px"></div>
<div class="t" style="left:1090px;top:234px;">791 ms</div>
<div class="a" style="left:1292px;top:234px;width:14px;height:13px;border:1px solid #707070"></div>
<div class="t" style="left:1312px;top:233px;">LX Mode</div>
<div class="a" style="left:1030px;top:259px;width:1px;height:3px;background:#ff8c00"></div><div class="a" style="left:1030px;top:284px;width:1px;height:3px;background:#ff8c00"></div>
<div class="a" style="left:1053px;top:259px;width:1px;height:3px;background:#ff8c00"></div><div class="a" style="left:1053px;top:284px;width:1px;height:3px;background:#ff8c00"></div>
<div class="a" style="left:1076px;top:259px;width:1px;height:3px;background:#ff8c00"></div><div class="a" style="left:1076px;top:284px;width:1px;height:3px;background:#ff8c00"></div>
<div class="a" style="left:1099px;top:259px;width:1px;height:3px;background:#ff8c00"></div><div class="a" style="left:1099px;top:284px;width:1px;height:3px;background:#ff8c00"></div>
<div class="a" style="left:1121px;top:259px;width:1px;height:3px;background:#ff8c00"></div><div class="a" style="left:1121px;top:284px;width:1px;height:3px;background:#ff8c00"></div>
<div class="a" style="left:1144px;top:259px;width:1px;height:3px;background:#ff8c00"></div><div class="a" style="left:1144px;top:284px;width:1px;height:3px;background:#ff8c00"></div>
<div class="a" style="left:1168px;top:259px;width:1px;height:3px;background:#ff8c00"></div><div class="a" style="left:1168px;top:284px;width:1px;height:3px;background:#ff8c00"></div>
<div class="a" style="left:1190px;top:259px;width:1px;height:3px;background:#ff8c00"></div><div class="a" style="left:1190px;top:284px;width:1px;height:3px;background:#ff8c00"></div>
<div class="a" style="left:1213px;top:259px;width:1px;height:3px;background:#ff8c00"></div><div class="a" style="left:1213px;top:284px;width:1px;height:3px;background:#ff8c00"></div>
<div class="a" style="left:1234px;top:259px;width:1px;height:3px;background:#ff8c00"></div><div class="a" style="left:1234px;top:284px;width:1px;height:3px;background:#ff8c00"></div>
<div class="a" style="left:1256px;top:259px;width:1px;height:3px;background:#ff8c00"></div><div class="a" style="left:1256px;top:284px;width:1px;height:3px;background:#ff8c00"></div>
<div class="a" style="left:1279px;top:259px;width:1px;height:3px;background:#ff8c00"></div><div class="a" style="left:1279px;top:284px;width:1px;height:3px;background:#ff8c00"></div>
<div class="a" style="left:1301px;top:259px;width:1px;height:3px;background:#ff8c00"></div><div class="a" style="left:1301px;top:284px;width:1px;height:3px;background:#ff8c00"></div>
<div class="a" style="left:1324px;top:259px;width:1px;height:3px;background:#ff8c00"></div><div class="a" style="left:1324px;top:284px;width:1px;height:3px;background:#ff8c00"></div>
<div class="a" style="left:1347px;top:259px;width:1px;height:3px;background:#ff8c00"></div><div class="a" style="left:1347px;top:284px;width:1px;height:3px;background:#ff8c00"></div>
<div class="a" style="left:1354px;top:259px;width:1px;height:3px;background:#ff8c00"></div><div class="a" style="left:1354px;top:284px;width:1px;height:3px;background:#ff8c00"></div>
<div class="a" style="left:1030px;top:271px;width:326px;height:4px;border:1px solid #e8e8e8;background:#202020"></div>
<div class="a" style="left:1289px;top:264px;width:11px;height:18px;background:#ff8c00"></div>
<div class="t" style="left:1030px;top:297px;">Quick Picks</div>
<div class="bx" style="left:1097px;top:292px;width:215px;height:25px"></div>
<svg class="a" style="left:1299px;top:301.5px" width="9" height="6"><path d="M1 1.5L4 4.5L7 1.5" stroke="#8a8a8a" stroke-width="1.1" fill="none"/></svg>
<div class="a" style="left:1318px;top:298px;width:14px;height:13px;border:1px solid #a0a0a0;background:#444"></div>
<div class="a" style="left:1337px;top:296px;width:24px;height:16px;overflow:hidden"><div class="t" style="left:0;top:0">Auto</div></div>
<div class="t" style="left:1026px;top:331px;">Gain</div>
<div class="a" style="left:1111px;top:334px;width:205px;height:4px;border:1px solid #e8e8e8;background:#202020"></div>
<div class="a" style="left:1111px;top:348px;width:1px;height:3px;background:#ff8c00"></div>
<div class="a" style="left:1132px;top:348px;width:1px;height:3px;background:#ff8c00"></div>
<div class="a" style="left:1153px;top:348px;width:1px;height:3px;background:#ff8c00"></div>
<div class="a" style="left:1174px;top:348px;width:1px;height:3px;background:#ff8c00"></div>
<div class="a" style="left:1196px;top:348px;width:1px;height:3px;background:#ff8c00"></div>
<div class="a" style="left:1217px;top:348px;width:1px;height:3px;background:#ff8c00"></div>
<div class="a" style="left:1238px;top:348px;width:1px;height:3px;background:#ff8c00"></div>
<div class="a" style="left:1259px;top:348px;width:1px;height:3px;background:#ff8c00"></div>
<div class="a" style="left:1280px;top:348px;width:1px;height:3px;background:#ff8c00"></div>
<div class="a" style="left:1302px;top:348px;width:1px;height:3px;background:#ff8c00"></div>
<div class="a" style="left:1319px;top:348px;width:1px;height:5px;background:#ff8c00"></div>
<svg class="a" style="left:1314px;top:328px" width="12" height="19"><path d="M0 0H11V13L5.5 18.5L0 13Z" fill="#ff8c00"/></svg>
<div class="bx" style="left:1328px;top:328px;width:31px;height:20px"></div>
<div class="t" style="left:1331px;top:331px;">5000</div>
<div class="t" style="left:1026px;top:356px;">Frame Rate</div>
<div class="t" style="left:1026px;top:368px;">Limit</div>
<div class="bx" style="left:1108px;top:359px;width:252px;height:20px"></div>
<svg class="a" style="left:1347px;top:366.0px" width="9" height="6"><path d="M1 1.5L4 4.5L7 1.5" stroke="#8a8a8a" stroke-width="1.1" fill="none"/></svg>
<div class="t" style="left:1115px;top:361px;">Maximum</div>
<div class="t" style="left:1026px;top:394px;">Options</div>
<div class="btn" style="left:1264px;top:389px;width:96px;height:23px;line-height:21px">Show...</div>
<div class="t" style="left:1026px;top:474px;">Timestamp</div>
<div class="t" style="left:1026px;top:486px;">Frames</div>
<div class="bx" style="left:1108px;top:477px;width:252px;height:20px"></div>
<svg class="a" style="left:1347px;top:484.0px" width="9" height="6"><path d="M1 1.5L4 4.5L7 1.5" stroke="#8a8a8a" stroke-width="1.1" fill="none"/></svg>
<div class="t" style="left:1114px;top:479px;">On</div>
<div class="a" style="left:1022px;top:556px;width:1px;height:91px;background:#c8c8c8"></div>
<svg class="a" style="left:1023px;top:555px" width="313" height="92" viewBox="1023 555 313 92"><path d="M1025 556V646" stroke="#857a1a" stroke-width="1.6" stroke-dasharray="7 4"/><path d="M1180 556V646" stroke="#857a1a" stroke-width="1.6" stroke-dasharray="7 4"/><path d="M1335 556V646" stroke="#857a1a" stroke-width="1.6" stroke-dasharray="7 4"/><polyline points="1024.0,645.2 1027.0,644.7 1030.0,643.7 1033.0,643.0 1036.0,642.2 1039.0,640.8 1042.0,639.9 1045.0,639.8 1048.0,638.4 1051.0,637.5 1054.0,637.4 1057.0,636.0 1060.0,635.5 1063.0,634.3 1066.0,633.6 1069.0,632.3 1072.0,631.9 1075.0,631.3 1078.0,630.1 1081.0,629.4 1084.0,628.5 1087.0,627.0 1090.0,626.9 1093.0,625.9 1096.0,624.7 1099.0,623.6 1102.0,623.6 1105.0,622.3 1108.0,621.7 1111.0,621.0 1114.0,620.0 1117.0,619.3 1120.0,617.9 1123.0,617.5 1126.0,616.3 1129.0,615.9 1132.0,615.0 1135.0,613.4 1138.0,612.5 1141.0,611.8 1144.0,611.6 1147.0,610.3 1150.0,609.6 1153.0,608.4 1156.0,607.8 1159.0,606.8 1162.0,605.9 1165.0,605.3 1168.0,604.4 1171.0,603.9 1174.0,602.8 1177.0,602.2 1180.0,601.2 1183.0,600.5 1186.0,599.3 1189.0,598.0 1192.0,597.8 1195.0,597.1 1198.0,596.1 1201.0,594.9 1204.0,594.2 1207.0,592.9 1210.0,592.6 1213.0,591.5 1216.0,590.4 1219.0,589.3 1222.0,589.2 1225.0,588.5 1228.0,586.7 1231.0,586.6 1234.0,585.4 1237.0,584.2 1240.0,583.5 1243.0,583.1 1246.0,582.4 1249.0,580.7 1252.0,580.4 1255.0,579.0 1258.0,578.8 1261.0,577.5 1264.0,577.2 1267.0,576.5 1270.0,575.1 1273.0,574.8 1276.0,573.2 1279.0,572.1 1282.0,571.8 1285.0,570.4 1288.0,569.7 1291.0,569.0 1294.0,568.4 1297.0,567.1 1300.0,566.1 1303.0,566.1 1306.0,564.7 1309.0,564.4 1312.0,563.5 1315.0,562.2 1318.0,561.4 1321.0,560.6 1324.0,559.8 1327.0,558.9 1330.0,558.0 1333.0,557.2" fill="none" stroke="#d6d000" stroke-width="1.3"/><polyline points="1025.0,570.0 1026.0,580.0 1027.0,590.0 1028.0,594.0 1029.0,598.0 1030.0,602.0 1031.0,602.6 1032.0,603.2 1033.0,603.8 1034.0,604.4 1035.0,605.0 1036.0,605.5 1037.0,606.0 1038.0,606.5 1039.0,607.0 1040.0,607.5 1041.0,608.0 1042.0,608.5 1043.0,609.0 1044.0,609.5 1045.0,610.0 1046.0,610.3 1047.0,610.7 1048.0,611.0 1049.0,611.3 1050.0,611.7 1051.0,612.0 1052.0,612.3 1053.0,612.7 1054.0,613.0 1055.0,613.3 1056.0,613.7 1057.0,614.0 1058.0,614.3 1059.0,614.7 1060.0,615.0 1061.0,616.5 1062.0,615.5 1063.0,615.6 1064.0,616.6 1065.0,615.5 1066.0,615.9 1067.0,618.1 1068.0,617.1 1069.0,617.4 1070.0,616.1 1071.0,617.5 1072.0,618.2 1073.0,616.9 1074.0,618.8 1075.0,619.1 1076.0,617.8 1077.0,619.6 1078.0,619.4 1079.0,620.3 1080.0,619.6 1081.0,620.8 1082.0,621.2 1083.0,619.4 1084.0,619.8 1085.0,621.7 1086.0,622.8 1087.0,621.1 1088.0,621.9 1089.0,622.5 1090.0,622.0 1091.0,622.4 1092.0,622.5 1093.0,622.9 1094.0,623.8 1095.0,623.2 1096.0,623.7 1097.0,625.0 1098.0,623.2 1099.0,624.9 1100.0,625.7 1101.0,624.6 1102.0,624.5 1103.0,626.3 1104.0,624.9 1105.0,624.9 1106.0,625.7 1107.0,626.6 1108.0,625.1 1109.0,625.9 1110.0,626.0 1111.0,627.6 1112.0,626.6 1113.0,627.9 1114.0,626.2 1115.0,626.8 1116.0,627.8 1117.0,628.6 1118.0,627.6 1119.0,627.1 1120.0,626.9 1121.0,628.2 1122.0,627.4 1123.0,629.3 1124.0,629.5 1125.0,627.8 1126.0,628.2 1127.0,629.8 1128.0,629.5 1129.0,630.1 1130.0,628.9 1131.0,628.4 1132.0,629.0 1133.0,630.6 1134.0,629.2 1135.0,629.6 1136.0,629.9 1137.0,630.0 1138.0,630.1 1139.0,631.7 1140.0,629.7 1141.0,629.4 1142.0,632.2 1143.0,632.1 1144.0,632.6 1145.0,631.1 1146.0,632.7 1147.0,632.8 1148.0,631.0 1149.0,632.6 1150.0,632.9 1151.0,632.6 1152.0,632.3 1153.0,631.7 1154.0,632.0 1155.0,631.8 1156.0,631.4 1157.0,633.0 1158.0,632.3 1159.0,633.8 1160.0,631.8 1161.0,634.3 1162.0,633.8 1163.0,634.6 1164.0,634.6 1165.0,634.7 1166.0,634.0 1167.0,632.5 1168.0,634.6 1169.0,633.1 1170.0,633.6 1171.0,634.7 1172.0,634.5 1173.0,634.3 1174.0,635.8 1175.0,635.0 1176.0,634.4 1177.0,634.2 1178.0,636.1 1179.0,635.1 1180.0,636.1 1181.0,635.0 1182.0,634.6 1183.0,635.7 1184.0,636.6 1185.0,634.9 1186.0,636.7 1187.0,637.2 1188.0,637.0 1189.0,637.1 1190.0,635.0 1191.0,636.8 1192.0,637.6 1193.0,635.4 1194.0,636.1 1195.0,636.2 1196.0,637.1 1197.0,636.9 1198.0,637.1 1199.0,638.1 1200.0,636.0 1201.0,636.3 1202.0,636.6 1203.0,636.7 1204.0,636.7 1205.0,639.3 1206.0,639.1 1207.0,637.1 1208.0,638.3 1209.0,637.9 1210.0,638.0 1211.0,638.3 1212.0,639.2 1213.0,639.1 1214.0,638.6 1215.0,638.2 1216.0,638.7 1217.0,638.3 1218.0,639.6 1219.0,640.2 1220.0,639.3 1221.0,638.6 1222.0,639.0 1223.0,639.6 1224.0,640.4 1225.0,641.0 1226.0,640.0 1227.0,641.3 1228.0,640.9 1229.0,640.5 1230.0,640.4 1231.0,640.9 1232.0,641.6 1233.0,640.9 1234.0,641.8 1235.0,641.2 1236.0,640.7 1237.0,641.7 1238.0,642.2 1239.0,640.6 1240.0,641.7 1241.0,641.8 1242.0,643.2 1243.0,643.4 1244.0,642.0 1245.0,643.6 1246.0,643.4 1247.0,642.0 1248.0,642.7 1249.0,641.8 1250.0,643.9 1251.0,643.5 1252.0,644.1 1253.0,643.9 1254.0,643.5 1255.0,643.8 1256.0,643.3 1257.0,642.0 1258.0,643.4 1259.0,641.8 1260.0,642.2 1261.0,644.0 1262.0,642.0 1263.0,642.1 1264.0,642.2 1265.0,644.4 1266.0,642.4 1267.0,642.0 1268.0,644.3 1269.0,642.3 1270.0,644.4 1271.0,643.9 1272.0,644.4 1273.0,644.7 1274.0,643.7 1275.0,644.3 1276.0,642.2 1277.0,644.3 1278.0,643.6 1279.0,644.2 1280.0,642.5 1281.0,644.3 1282.0,644.9 1283.0,642.4 1284.0,643.2 1285.0,643.9 1286.0,644.6 1287.0,643.0 1288.0,642.9 1289.0,643.1 1290.0,644.1 1291.0,644.5 1292.0,643.5 1293.0,643.5 1294.0,643.6 1295.0,643.5 1296.0,643.7 1297.0,642.8 1298.0,644.0 1299.0,645.3 1300.0,643.8 1301.0,644.7 1302.0,643.0 1303.0,644.5 1304.0,644.7 1305.0,644.5 1306.0,644.0 1307.0,644.0 1308.0,644.4 1309.0,645.1 1310.0,643.0 1311.0,642.9 1312.0,644.7 1313.0,645.2 1314.0,644.0 1315.0,643.8 1316.0,644.6 1317.0,643.1 1318.0,643.3 1319.0,643.2 1320.0,644.2 1321.0,643.5 1322.0,643.3 1323.0,644.5 1324.0,645.3 1325.0,643.4 1326.0,644.6 1327.0,643.8 1328.0,645.0 1329.0,644.2 1330.0,643.3 1331.0,643.2 1332.0,642.7 1333,644" fill="none" stroke="#f00000" stroke-width="1.8"/><polyline points="1024.0,560.0 1025.0,565.5 1026.0,571.0 1027.0,576.5 1028.0,582.0 1029.0,584.5 1030.0,587.0 1031.0,589.5 1032.0,592.0 1033.0,594.7 1034.0,597.3 1035.0,600.0 1036.0,601.2 1037.0,602.4 1038.0,603.6 1039.0,604.8 1040.0,606.0 1041.0,606.9 1042.0,607.8 1043.0,608.6 1044.0,609.5 1045.0,610.4 1046.0,611.2 1047.0,612.1 1048.0,613.0 1049.0,613.3 1050.0,613.7 1051.0,614.0 1052.0,614.3 1053.0,614.7 1054.0,615.0 1055.0,615.3 1056.0,615.7 1057.0,616.0 1058.0,616.3 1059.0,616.7 1060.0,617.0 1061.0,617.1 1062.0,617.0 1063.0,616.5 1064.0,617.2 1065.0,617.3 1066.0,618.7 1067.0,617.1 1068.0,619.6 1069.0,618.3 1070.0,618.8 1071.0,618.6 1072.0,619.7 1073.0,619.9 1074.0,619.3 1075.0,619.2 1076.0,620.0 1077.0,620.5 1078.0,619.4 1079.0,620.5 1080.0,621.3 1081.0,620.0 1082.0,619.5 1083.0,619.6 1084.0,621.1 1085.0,621.1 1086.0,622.0 1087.0,621.9 1088.0,620.3 1089.0,620.3 1090.0,620.6 1091.0,620.5 1092.0,622.1 1093.0,622.6 1094.0,622.9 1095.0,621.2 1096.0,623.0 1097.0,621.6 1098.0,622.0 1099.0,623.0 1100.0,621.3 1101.0,621.5 1102.0,623.7 1103.0,622.3 1104.0,622.6 1105.0,623.3 1106.0,623.7 1107.0,622.0 1108.0,623.0 1109.0,623.4 1110.0,623.7 1111.0,623.1 1112.0,624.2 1113.0,625.4 1114.0,623.9 1115.0,624.5 1116.0,623.4 1117.0,624.0 1118.0,625.2 1119.0,623.8 1120.0,626.1 1121.0,626.3 1122.0,624.1 1123.0,626.6 1124.0,625.2 1125.0,626.4 1126.0,626.5 1127.0,625.3 1128.0,626.5 1129.0,626.6 1130.0,627.2 1131.0,625.8 1132.0,627.3 1133.0,628.0 1134.0,627.3 1135.0,627.1 1136.0,626.0 1137.0,627.2 1138.0,627.0 1139.0,628.1 1140.0,628.1 1141.0,627.9 1142.0,627.0 1143.0,628.4 1144.0,628.5 1145.0,627.4 1146.0,629.5 1147.0,629.0 1148.0,627.6 1149.0,630.0 1150.0,627.9 1151.0,628.6 1152.0,629.8 1153.0,629.6 1154.0,629.6 1155.0,630.0 1156.0,629.6 1157.0,629.3 1158.0,629.1 1159.0,628.9 1160.0,630.9 1161.0,631.1 1162.0,630.6 1163.0,631.3 1164.0,630.4 1165.0,630.3 1166.0,630.7 1167.0,632.2 1168.0,630.0 1169.0,631.5 1170.0,630.9 1171.0,632.5 1172.0,631.4 1173.0,631.5 1174.0,631.8 1175.0,632.4 1176.0,633.1 1177.0,632.1 1178.0,633.6 1179.0,631.7 1180.0,632.3 1181.0,631.9 1182.0,632.1 1183.0,634.1 1184.0,634.1 1185.0,632.7 1186.0,632.8 1187.0,633.6 1188.0,634.6 1189.0,635.0 1190.0,634.9 1191.0,634.6 1192.0,633.5 1193.0,634.3 1194.0,633.9 1195.0,634.9 1196.0,635.2 1197.0,634.3 1198.0,634.6 1199.0,636.2 1200.0,634.2 1201.0,636.5 1202.0,636.9 1203.0,637.2 1204.0,635.7 1205.0,636.3 1206.0,636.5 1207.0,636.8 1208.0,637.9 1209.0,637.2 1210.0,636.3 1211.0,638.0 1212.0,637.0 1213.0,637.5 1214.0,638.0 1215.0,636.1 1216.0,638.3 1217.0,638.2 1218.0,637.8 1219.0,638.0 1220.0,638.0 1221.0,637.4 1222.0,638.5 1223.0,637.2 1224.0,638.6 1225.0,639.2 1226.0,638.7 1227.0,639.2 1228.0,640.4 1229.0,640.4 1230.0,638.4 1231.0,640.4 1232.0,640.0 1233.0,638.5 1234.0,639.5 1235.0,639.3 1236.0,639.0 1237.0,640.4 1238.0,641.6 1239.0,640.1 1240.0,641.7 1241.0,641.4 1242.0,639.9 1243.0,642.1 1244.0,641.5 1245.0,642.5 1246.0,642.1 1247.0,642.3 1248.0,641.3 1249.0,642.7 1250.0,643.2 1251.0,643.0 1252.0,641.9 1253.0,642.8 1254.0,642.0 1255.0,641.0 1256.0,640.8 1257.0,641.0 1258.0,641.3 1259.0,641.2 1260.0,642.2 1261.0,642.8 1262.0,642.3 1263.0,642.0 1264.0,642.7 1265.0,641.8 1266.0,642.2 1267.0,643.1 1268.0,642.1 1269.0,641.5 1270.0,643.5 1271.0,643.0 1272.0,642.1 1273.0,642.1 1274.0,642.6 1275.0,642.8 1276.0,641.7 1277.0,641.1 1278.0,641.7 1279.0,643.4 1280.0,641.6 1281.0,642.5 1282.0,641.8 1283.0,641.8 1284.0,641.8 1285.0,642.4 1286.0,641.8 1287.0,641.4 1288.0,641.7 1289.0,641.9 1290.0,642.8 1291.0,641.6 1292.0,641.5 1293.0,642.7 1294.0,642.6 1295.0,643.5 1296.0,641.7 1297.0,642.7 1298.0,642.7 1299.0,641.7 1300.0,644.3 1301.0,642.2 1302.0,641.8 1303.0,642.8 1304.0,641.9 1305.0,643.2 1306.0,642.3 1307.0,641.7 1308.0,641.4 1309.0,643.3 1310.0,642.0 1311.0,643.4 1312.0,642.4 1313.0,643.7 1314.0,641.9 1315.0,641.7 1316.0,641.7 1317.0,643.2 1318.0,642.7 1319.0,641.8 1320.0,641.1 1321.0,642.7 1322.0,643.5 1323.0,642.4 1324.0,640.7 1325.0,640.7 1326.0,640.9 1327.0,634.1 1328.0,626.7 1329.0,630.2 1330.0,635.2 1331.0,639.3 1332.0,640.8 1333,645" fill="none" stroke="#008000" stroke-width="1.8"/><polyline points="1024.0,572.0 1025.0,573.7 1026.0,575.3 1027.0,577.0 1028.0,578.7 1029.0,580.3 1030.0,582.0 1031.0,584.7 1032.0,587.3 1033.0,590.0 1034.0,592.7 1035.0,595.3 1036.0,598.0 1037.0,599.2 1038.0,600.4 1039.0,601.6 1040.0,602.8 1041.0,604.0 1042.0,604.7 1043.0,605.3 1044.0,606.0 1045.0,606.7 1046.0,607.3 1047.0,608.0 1048.0,608.7 1049.0,609.3 1050.0,610.0 1051.0,610.4 1052.0,610.8 1053.0,611.2 1054.0,611.6 1055.0,612.0 1056.0,612.4 1057.0,612.8 1058.0,613.2 1059.0,613.6 1060.0,614.0 1061.0,615.6 1062.0,614.4 1063.0,615.6 1064.0,616.2 1065.0,616.5 1066.0,614.2 1067.0,615.2 1068.0,616.3 1069.0,617.5 1070.0,615.3 1071.0,616.2 1072.0,618.0 1073.0,616.2 1074.0,617.2 1075.0,617.3 1076.0,618.5 1077.0,619.4 1078.0,617.6 1079.0,619.4 1080.0,619.7 1081.0,620.1 1082.0,619.5 1083.0,620.7 1084.0,619.3 1085.0,619.6 1086.0,619.3 1087.0,621.0 1088.0,620.3 1089.0,619.9 1090.0,619.8 1091.0,621.5 1092.0,621.4 1093.0,621.9 1094.0,621.1 1095.0,621.6 1096.0,620.8 1097.0,622.6 1098.0,620.8 1099.0,622.2 1100.0,623.2 1101.0,623.2 1102.0,621.7 1103.0,622.3 1104.0,624.2 1105.0,623.8 1106.0,624.6 1107.0,624.8 1108.0,623.8 1109.0,625.2 1110.0,624.9 1111.0,624.0 1112.0,624.2 1113.0,623.6 1114.0,624.7 1115.0,626.4 1116.0,624.2 1117.0,625.7 1118.0,624.6 1119.0,624.7 1120.0,626.4 1121.0,625.4 1122.0,625.0 1123.0,625.4 1124.0,626.9 1125.0,626.8 1126.0,625.3 1127.0,626.1 1128.0,628.3 1129.0,626.3 1130.0,627.4 1131.0,627.1 1132.0,628.2 1133.0,627.8 1134.0,628.5 1135.0,627.9 1136.0,627.0 1137.0,627.1 1138.0,627.0 1139.0,629.2 1140.0,627.3 1141.0,627.2 1142.0,629.9 1143.0,627.9 1144.0,629.9 1145.0,627.8 1146.0,629.0 1147.0,628.4 1148.0,630.2 1149.0,629.8 1150.0,629.9 1151.0,630.4 1152.0,630.8 1153.0,629.5 1154.0,630.3 1155.0,630.0 1156.0,629.2 1157.0,631.3 1158.0,630.8 1159.0,631.5 1160.0,629.9 1161.0,631.0 1162.0,630.9 1163.0,631.7 1164.0,630.0 1165.0,630.9 1166.0,631.4 1167.0,630.4 1168.0,631.8 1169.0,632.5 1170.0,631.7 1171.0,632.5 1172.0,632.5 1173.0,631.5 1174.0,632.0 1175.0,633.9 1176.0,632.2 1177.0,632.6 1178.0,631.7 1179.0,632.2 1180.0,632.2 1181.0,634.4 1182.0,634.0 1183.0,634.5 1184.0,634.9 1185.0,634.0 1186.0,635.0 1187.0,634.0 1188.0,633.8 1189.0,635.4 1190.0,635.4 1191.0,635.7 1192.0,634.5 1193.0,635.4 1194.0,634.5 1195.0,636.3 1196.0,636.2 1197.0,634.5 1198.0,636.4 1199.0,634.5 1200.0,634.3 1201.0,636.2 1202.0,635.1 1203.0,635.8 1204.0,636.3 1205.0,634.7 1206.0,636.8 1207.0,635.6 1208.0,636.1 1209.0,636.0 1210.0,637.2 1211.0,637.4 1212.0,636.2 1213.0,635.8 1214.0,636.4 1215.0,636.9 1216.0,636.0 1217.0,636.4 1218.0,638.2 1219.0,638.1 1220.0,639.0 1221.0,639.1 1222.0,638.9 1223.0,637.6 1224.0,637.2 1225.0,637.7 1226.0,638.2 1227.0,638.5 1228.0,638.7 1229.0,638.3 1230.0,639.8 1231.0,638.3 1232.0,638.9 1233.0,640.2 1234.0,640.1 1235.0,638.8 1236.0,638.7 1237.0,640.4 1238.0,638.3 1239.0,638.7 1240.0,640.0 1241.0,640.1 1242.0,639.2 1243.0,639.0 1244.0,639.5 1245.0,641.2 1246.0,640.5 1247.0,642.0 1248.0,641.6 1249.0,642.2 1250.0,639.7 1251.0,640.2 1252.0,639.7 1253.0,640.9 1254.0,640.7 1255.0,639.9 1256.0,641.4 1257.0,640.1 1258.0,640.8 1259.0,640.7 1260.0,642.2 1261.0,641.2 1262.0,640.8 1263.0,640.2 1264.0,641.4 1265.0,642.0 1266.0,642.1 1267.0,642.8 1268.0,642.6 1269.0,641.1 1270.0,640.8 1271.0,642.6 1272.0,642.7 1273.0,641.9 1274.0,642.9 1275.0,642.1 1276.0,641.4 1277.0,641.2 1278.0,640.8 1279.0,642.6 1280.0,643.3 1281.0,643.4 1282.0,642.2 1283.0,642.8 1284.0,643.6 1285.0,643.3 1286.0,642.7 1287.0,642.2 1288.0,642.6 1289.0,641.6 1290.0,641.7 1291.0,643.2 1292.0,644.1 1293.0,642.9 1294.0,642.5 1295.0,642.4 1296.0,642.7 1297.0,643.7 1298.0,642.8 1299.0,644.2 1300.0,642.0 1301.0,642.4 1302.0,643.0 1303.0,642.6 1304.0,643.8 1305.0,643.7 1306.0,644.0 1307.0,643.0 1308.0,641.4 1309.0,642.9 1310.0,642.8 1311.0,642.5 1312.0,641.9 1313.0,643.1 1314.0,643.6 1315.0,641.3 1316.0,642.9 1317.0,642.0 1318.0,642.3 1319.0,643.4 1320.0,643.5 1321.0,642.6 1322.0,641.3 1323.0,643.3 1324.0,641.2 1325.0,641.7 1326.0,642.9 1327.0,635.5 1328.0,629.4 1329.0,634.3 1330.0,637.2 1331.0,638.5 1332.0,641.7 1333,645" fill="none" stroke="#ffffff" stroke-width="1.8"/><polyline points="1024.0,558.0 1024.0,578.0 1025.0,578.2 1026.0,578.5 1027.0,578.8 1028.0,579.0 1029.0,579.2 1030.0,579.4 1031.0,579.6 1032.0,579.8 1033.0,580.0 1034.0,580.2 1035.0,580.4 1036.0,580.6 1037.0,580.8 1038.0,581.0 1039.0,582.0 1040.0,583.0 1041.0,585.3 1042.0,587.7 1043.0,590.0 1044.0,592.7 1045.0,595.3 1046.0,598.0 1047.0,599.2 1048.0,600.5 1049.0,601.8 1050.0,603.0 1051.0,603.9 1052.0,604.8 1053.0,605.6 1054.0,606.5 1055.0,607.4 1056.0,608.2 1057.0,609.1 1058.0,610.0 1059.0,610.6 1060.0,611.1 1061.0,611.1 1062.0,611.3 1063.0,612.2 1064.0,614.8 1065.0,612.8 1066.0,613.6 1067.0,613.8 1068.0,613.8 1069.0,615.4 1070.0,616.3 1071.0,616.9 1072.0,616.7 1073.0,617.6 1074.0,615.6 1075.0,616.7 1076.0,619.0 1077.0,616.8 1078.0,617.7 1079.0,618.6 1080.0,618.4 1081.0,619.3 1082.0,618.0 1083.0,618.7 1084.0,620.9 1085.0,618.8 1086.0,621.0 1087.0,619.1 1088.0,621.6 1089.0,620.8 1090.0,620.9 1091.0,619.6 1092.0,619.6 1093.0,621.7 1094.0,620.2 1095.0,620.4 1096.0,622.3 1097.0,622.6 1098.0,620.4 1099.0,623.1 1100.0,622.1 1101.0,621.8 1102.0,621.2 1103.0,622.1 1104.0,624.0 1105.0,622.1 1106.0,621.9 1107.0,622.1 1108.0,622.2 1109.0,622.9 1110.0,624.7 1111.0,622.5 1112.0,622.9 1113.0,625.2 1114.0,625.5 1115.0,625.6 1116.0,623.7 1117.0,624.1 1118.0,626.0 1119.0,624.8 1120.0,625.6 1121.0,624.6 1122.0,623.9 1123.0,624.9 1124.0,626.1 1125.0,626.3 1126.0,625.8 1127.0,625.6 1128.0,625.9 1129.0,625.8 1130.0,626.1 1131.0,627.1 1132.0,625.4 1133.0,626.6 1134.0,627.7 1135.0,627.6 1136.0,625.8 1137.0,628.1 1138.0,627.8 1139.0,626.1 1140.0,626.4 1141.0,626.4 1142.0,626.1 1143.0,628.8 1144.0,627.3 1145.0,628.7 1146.0,626.7 1147.0,626.5 1148.0,629.0 1149.0,628.9 1150.0,629.5 1151.0,628.8 1152.0,628.4 1153.0,629.2 1154.0,627.4 1155.0,628.8 1156.0,628.6 1157.0,627.9 1158.0,629.3 1159.0,628.6 1160.0,629.2 1161.0,629.0 1162.0,628.9 1163.0,629.1 1164.0,629.9 1165.0,631.1 1166.0,631.1 1167.0,631.0 1168.0,631.0 1169.0,629.6 1170.0,631.6 1171.0,629.7 1172.0,629.4 1173.0,630.6 1174.0,631.3 1175.0,630.3 1176.0,631.3 1177.0,630.4 1178.0,632.4 1179.0,631.1 1180.0,631.3 1181.0,631.5 1182.0,632.6 1183.0,633.0 1184.0,631.8 1185.0,631.7 1186.0,632.3 1187.0,630.8 1188.0,631.9 1189.0,633.2 1190.0,633.1 1191.0,631.2 1192.0,633.6 1193.0,632.4 1194.0,634.1 1195.0,632.5 1196.0,632.2 1197.0,633.2 1198.0,634.3 1199.0,633.1 1200.0,634.5 1201.0,634.1 1202.0,633.3 1203.0,633.2 1204.0,633.9 1205.0,633.7 1206.0,633.8 1207.0,634.6 1208.0,635.4 1209.0,634.7 1210.0,633.6 1211.0,633.9 1212.0,634.4 1213.0,635.2 1214.0,634.0 1215.0,633.9 1216.0,634.7 1217.0,634.7 1218.0,634.1 1219.0,635.7 1220.0,636.8 1221.0,635.9 1222.0,636.6 1223.0,636.9 1224.0,637.1 1225.0,637.4 1226.0,636.2 1227.0,637.0 1228.0,635.5 1229.0,637.7 1230.0,636.4 1231.0,636.8 1232.0,638.1 1233.0,636.5 1234.0,636.4 1235.0,638.2 1236.0,637.7 1237.0,636.4 1238.0,636.3 1239.0,637.4 1240.0,636.5 1241.0,638.9 1242.0,637.2 1243.0,637.6 1244.0,638.0 1245.0,638.5 1246.0,638.4 1247.0,639.0 1248.0,639.2 1249.0,638.7 1250.0,637.9 1251.0,640.4 1252.0,639.6 1253.0,637.9 1254.0,638.9 1255.0,639.8 1256.0,640.5 1257.0,637.9 1258.0,637.8 1259.0,639.1 1260.0,639.0 1261.0,640.3 1262.0,640.2 1263.0,638.8 1264.0,639.1 1265.0,639.5 1266.0,640.4 1267.0,638.5 1268.0,639.1 1269.0,638.2 1270.0,639.8 1271.0,638.1 1272.0,640.7 1273.0,639.5 1274.0,639.7 1275.0,638.3 1276.0,638.8 1277.0,639.5 1278.0,640.6 1279.0,639.7 1280.0,639.0 1281.0,641.0 1282.0,640.1 1283.0,639.7 1284.0,638.8 1285.0,639.1 1286.0,640.8 1287.0,638.7 1288.0,639.8 1289.0,640.1 1290.0,639.4 1291.0,640.6 1292.0,641.0 1293.0,640.9 1294.0,640.5 1295.0,639.1 1296.0,638.7 1297.0,639.8 1298.0,639.4 1299.0,639.1 1300.0,641.0 1301.0,639.2 1302.0,640.8 1303.0,641.1 1304.0,638.8 1305.0,641.0 1306.0,639.5 1307.0,638.9 1308.0,638.8 1309.0,638.4 1310.0,639.6 1311.0,639.3 1312.0,640.5 1313.0,640.4 1314.0,638.2 1315.0,639.1 1316.0,639.1 1317.0,638.4 1318.0,638.6 1319.0,638.6 1320.0,639.8 1321.0,638.7 1322.0,638.1 1323.0,638.3 1324.0,638.9 1325.0,639.2 1326.0,638.3 1327.0,637.8 1328.0,634.7 1329.0,634.2 1330.0,632.3 1331.0,635.4 1332.0,641.4 1333,645" fill="none" stroke="#0000ff" stroke-width="1.8"/></svg>
<div class="a" style="left:1022px;top:646px;width:341px;height:1px;background:#c8c8c8"></div>
<div class="a" style="left:1336px;top:557px;width:25px;height:25px;border:1px solid #6a6a6a"></div>
<div class="a" style="left:1336px;top:584px;width:25px;height:25px;border:1px solid #6a6a6a"></div>
<div class="a" style="left:1336px;top:611px;width:25px;height:25px;border:1px solid #6a6a6a"></div>
<svg class="a" style="left:1339px;top:560px" width="19" height="19" viewBox="0 0 19 19"><path d="M10.5 1.5L2.5 11H8.5L6.5 17.5L16 7.5H10Z" fill="none" stroke="#ff8c00" stroke-width="1.6" stroke-linejoin="round"/></svg>
<svg class="a" style="left:1339px;top:587px" width="19" height="19" viewBox="0 0 19 19"><path d="M5.2 7.5A5.5 5.5 0 1 1 4.5 12" fill="none" stroke="#ff8c00" stroke-width="1.7"/><path d="M2.5 10.5L5.5 12.8L7.8 9.5" fill="none" stroke="#ff8c00" stroke-width="1.5"/></svg>
<svg class="a" style="left:1340px;top:615px" width="17" height="17" viewBox="0 0 17 17"><path d="M1.5 1.5H12.5L15.5 4.5V15.5H1.5Z" fill="#555" stroke="#b0b0b0" stroke-width="1.3"/><rect x="4" y="2" width="7" height="5" fill="#b0b0b0"/><rect x="8" y="2.5" width="2" height="3" fill="#555"/></svg>

<!-- bottom panel -->
<div class="t" style="left:7px;top:470px;font-size:11px;">Live Stack</div>
<svg class="a" style="left:983px;top:472px" width="9" height="11" viewBox="0 0 9 11"><path d="M1.5 0.5h6M2.5 0.5v5.5M6.5 0.5v5.5M0.5 6h8M4.5 6v4.5" stroke="#ff8c00" stroke-width="1.1" fill="none"/><rect x="2.5" y="1" width="2" height="5" fill="#ff8c00"/></svg>
<svg class="a" style="left:999px;top:472px" width="11" height="11"><path d="M1 1L10 10M10 1L1 10" stroke="#ff8c00" stroke-width="1.4"/></svg>
<div class="ob" style="left:1px;top:492px;width:169px;height:61px"></div>
<div class="a" style="left:7px;top:490px;width:51px;height:4px;background:#000"></div>
<div class="t" style="left:9px;top:485px;font-size:11px;">Overview</div>
<div class="t" style="left:9px;top:500px;font-size:11px;">Frames Stacked:</div>
<div class="t" style="left:96px;top:500px;font-size:11px;">110</div>
<div class="t" style="left:9px;top:516px;font-size:11px;">Frames Ignored:</div>
<div class="t" style="left:96px;top:516px;font-size:11px;">1</div>
<div class="t" style="left:9px;top:532px;font-size:11px;">Total Exposure:</div>
<div class="t" style="left:95px;top:532px;font-size:11px;">86,99s</div>
<div class="ob" style="left:1px;top:561px;width:169px;height:70px"></div>
<div class="a" style="left:7px;top:559px;width:42px;height:4px;background:#000"></div>
<div class="t" style="left:9px;top:554px;font-size:11px;">Actions</div>
<div class="gbtn" style="left:11px;top:570px;width:70px;height:23px;line-height:21px;font-size:11px">Clear</div>
<div class="gbtn" style="left:90px;top:570px;width:52px;height:23px;line-height:21px;font-size:11px">Save</div>
<div class="a" style="left:141px;top:570px;width:19px;height:23px;border:1px solid #6e6e6e"></div>
<svg class="a" style="left:146px;top:579px" width="9" height="6"><path d="M1 1L4.5 4.5L8 1" stroke="#ff8c00" stroke-width="1.8" fill="none"/></svg>
<div class="gbtn" style="left:11px;top:599px;width:70px;height:23px;line-height:21px;font-size:11px">Pause</div>
<div class="ob" style="left:170px;top:492px;width:170px;height:153px"></div>
<div class="a" style="left:178px;top:490px;width:46px;height:4px;background:#000"></div>
<div class="t" style="left:180px;top:485px;font-size:11px;">Controls</div>
<div class="cb" style="left:179px;top:501px"></div>
<svg class="a" style="left:179px;top:501px" width="14" height="14"><path d="M3 7.2L5.8 10.2L11 3.5" stroke="#ff8c00" stroke-width="1.8" fill="none"/></svg>
<div class="t" style="left:198px;top:500px;font-size:11px;">Align Frames</div>
<div class="cb" style="left:179px;top:520px"></div>
<div class="t" style="left:198px;top:519px;font-size:11px;">FWHM Filter</div>
<div class="cb" style="left:179px;top:540px"></div>
<div class="t" style="left:198px;top:538px;font-size:11px;">Brightness Filter</div>
<div class="cb" style="left:179px;top:559px"></div>
<div class="t" style="left:198px;top:557px;font-size:11px;">Save Individual Frames</div>
<div class="cb" style="left:179px;top:578px"></div>
<svg class="a" style="left:179px;top:578px" width="14" height="14"><path d="M3 7.2L5.8 10.2L11 3.5" stroke="#ff8c00" stroke-width="1.8" fill="none"/></svg>
<div class="t" style="left:198px;top:576px;font-size:11px;">Auto Save on Clear/Close</div>
<div class="t" style="left:179px;top:598px;font-size:11px;">View</div>
<div class="bx" style="left:212px;top:596px;width:120px;height:18px"></div>
<div class="t" style="left:218px;top:599px;font-size:11px;">Stack</div>
<svg class="a" style="left:318px;top:602px" width="9" height="6"><path d="M1 1L4 4L7 1" stroke="#8a8a8a" stroke-width="1.1" fill="none"/></svg>
<div class="t" style="left:179px;top:621px;font-size:11px;">Stacking</div>
<div class="bx" style="left:230px;top:618px;width:102px;height:19px"></div>
<div class="t" style="left:236px;top:621px;font-size:11px;">Sigma Clipping</div>
<svg class="a" style="left:318px;top:624px" width="9" height="6"><path d="M1 1L4 4L7 1" stroke="#8a8a8a" stroke-width="1.1" fill="none"/></svg>
<div class="ob" style="left:1px;top:652px;width:339px;height:40px"></div>
<div class="a" style="left:7px;top:650px;width:55px;height:4px;background:#000"></div>
<div class="t" style="left:9px;top:645px;font-size:11px;">Advanced</div>
<div class="cb" style="left:11px;top:666px;width:14px;height:13px"></div>
<div class="t" style="left:30px;top:666px;font-size:11px;">Save and Reset every</div>
<div class="a" style="left:143px;top:662px;width:41px;height:20px;border:1px solid #6e6e6e"></div>
<div class="a" style="left:166px;top:663px;width:1px;height:18px;background:#6e6e6e"></div>
<div class="a" style="left:167px;top:672px;width:16px;height:1px;background:#6e6e6e"></div>
<svg class="a" style="left:168px;top:664px" width="14" height="16"><path d="M2.5 6L7 2.5L11.5 6M2.5 10L7 13.5L11.5 10" stroke="#8a4a20" stroke-width="1.6" fill="none"/></svg>
<div class="t" style="left:153px;top:666px;font-size:11px;color:#6a7a8a">5</div>
<div class="t" style="left:187px;top:665px;font-size:11px;">minutes total exposure</div>
<div class="bx" style="left:340px;top:503px;width:675px;height:202px;border-color:#a8a8a8"></div>
<div class="a" style="left:342px;top:487px;width:42px;height:17px;border:1px solid #a8a8a8"></div>
<div class="a t" style="left:342px;top:488px;width:42px;text-align:center;font-size:11px">Status</div>
<div class="a" style="left:383px;top:485px;width:66px;height:19px;border:1px solid #a8a8a8;border-bottom:none;background:#000"></div>
<div class="t" style="left:391px;top:487px;font-size:11px;">Histogram</div>
<div class="a" style="left:448px;top:487px;width:60px;height:17px;border:1px solid #a8a8a8"></div>
<div class="a t" style="left:448px;top:488px;width:60px;text-align:center;font-size:11px">Alignment</div>
<div class="a" style="left:508px;top:487px;width:55px;height:17px;border:1px solid #a8a8a8"></div>
<div class="a t" style="left:508px;top:488px;width:55px;text-align:center;font-size:11px">Stacking</div>
<div class="a" style="left:563px;top:487px;width:80px;height:17px;border:1px solid #a8a8a8"></div>
<div class="a t" style="left:563px;top:488px;width:80px;text-align:center;font-size:11px">Enhancement</div>
<div class="a" style="left:643px;top:487px;width:50px;height:17px;border:1px solid #a8a8a8"></div>
<div class="a t" style="left:643px;top:488px;width:50px;text-align:center;font-size:11px">Guiding</div>
<div class="a" style="left:693px;top:487px;width:81px;height:17px;border:1px solid #a8a8a8"></div>
<div class="a t" style="left:693px;top:488px;width:81px;text-align:center;font-size:11px">Filter (FWHM)</div>
<div class="a" style="left:774px;top:487px;width:98px;height:17px;border:1px solid #a8a8a8"></div>
<div class="a t" style="left:774px;top:488px;width:98px;text-align:center;font-size:11px">Filter (Brightness)</div>
<div class="a" style="left:872px;top:487px;width:67px;height:17px;border:1px solid #a8a8a8"></div>
<div class="a t" style="left:872px;top:488px;width:67px;text-align:center;font-size:11px">Drift Graph</div>
<div class="a" style="left:939px;top:487px;width:30px;height:17px;border:1px solid #a8a8a8"></div>
<div class="a t" style="left:939px;top:488px;width:30px;text-align:center;font-size:11px">Log</div>
<div class="a" style="left:342px;top:506px;width:598px;height:1px;background:#262626"></div>
<svg class="a" style="left:341px;top:504px" width="600" height="200" viewBox="341 504 600 200"><path d="M806 700.5H940" stroke="#4848a8" stroke-width="1.5"/><polyline points="343.0,532.5 344.0,532.5 345.0,532.5 346.0,532.5 347.0,532.5 348.0,532.6 349.0,532.6 350.0,532.6 351.0,532.6 352.0,532.6 353.0,532.6 354.0,532.6 355.0,532.6 356.0,532.7 357.0,532.7 358.0,532.7 359.0,532.7 360.0,532.7 361.0,532.7 362.0,532.7 363.0,532.8 364.0,532.8 365.0,532.8 366.0,532.8 367.0,532.8 368.0,532.8 369.0,532.8 370.0,532.8 371.0,532.9 372.0,532.9 373.0,532.9 374.0,532.9 375.0,532.9 376.0,532.9 377.0,532.9 378.0,532.9 379.0,533.0 380.0,533.0 381.0,533.0 382.0,533.0 383.0,533.0 384.0,533.0 385.0,533.0 386.0,533.0 387.0,533.0 388.0,533.1 389.0,533.1 390.0,533.1 391.0,533.1 392.0,533.1 393.0,533.1 394.0,533.1 395.0,533.1 396.0,533.2 397.0,533.2 398.0,533.2 399.0,533.2 400.0,533.2 401.0,533.2 402.0,533.2 403.0,533.2 404.0,533.3 405.0,533.3 406.0,533.3 407.0,533.3 408.0,533.3 409.0,533.3 410.0,533.3 411.0,533.4 412.0,533.4 413.0,533.4 414.0,533.4 415.0,533.4 416.0,533.4 417.0,533.4 418.0,533.4 419.0,533.5 420.0,533.5 421.0,533.5 422.0,533.5 423.0,533.5 424.0,533.5 425.0,533.5 426.0,533.5 427.0,533.5 428.0,533.6 429.0,533.6 430.0,533.6 431.0,533.6 432.0,533.6 433.0,533.6 434.0,533.6 435.0,533.6 436.0,533.7 437.0,533.7 438.0,533.7 439.0,533.7 440.0,533.7 441.0,533.7 442.0,533.7 443.0,533.8 444.0,533.8 445.0,533.8 446.0,533.8 447.0,533.8 448.0,533.8 449.0,533.8 450.0,533.8 451.0,533.9 452.0,533.9 453.0,533.9 454.0,533.9 455.0,533.9 456.0,533.9 457.0,533.9 458.0,533.9 459.0,534.0 460.0,534.0 461.0,534.0 462.0,534.0 463.0,534.0 464.0,534.0 465.0,534.0 466.1,533.9 467.1,533.9 468.1,533.9 469.1,533.9 470.1,533.9 471.1,533.9 472.2,533.8 473.2,533.8 474.2,533.8 475.2,533.8 476.2,533.8 477.3,533.7 478.3,533.7 479.3,533.7 480.3,533.7 481.3,533.7 482.3,533.7 483.4,533.6 484.4,533.6 485.4,533.6 486.4,533.6 487.4,533.6 488.5,533.5 489.5,533.5 490.5,533.5 491.5,533.5 492.5,533.5 493.5,533.5 494.6,533.4 495.6,533.4 496.6,533.4 497.6,533.2 498.6,532.9 499.6,532.7 500.6,532.4 501.7,532.2 502.7,531.9 503.7,531.7 504.7,531.4 505.7,531.2 506.7,531.0 507.7,530.7 508.7,530.5 509.8,530.2 510.8,530.0 511.8,529.7 512.8,529.5 513.8,529.3 514.8,529.0 515.8,528.8 516.8,528.5 517.9,528.3 518.9,528.0 519.9,527.8 520.9,527.5 521.9,527.3 522.9,527.3 523.9,527.4 525.0,527.4 526.0,527.4 527.0,527.5 528.0,527.5 529.0,527.5 530.1,527.6 531.1,527.6 532.1,527.7 533.1,527.7 534.2,527.7 535.2,527.8 536.2,527.8 537.2,527.8 538.2,527.9 539.3,527.9 540.3,527.9 541.3,528.0 542.3,528.0 543.4,528.0 544.4,528.1 545.4,528.1 546.4,528.2 547.4,528.2 548.5,528.2 549.5,528.3 550.5,528.3 551.5,528.6 552.6,528.8 553.6,529.1 554.7,529.3 555.7,529.6 556.7,529.9 557.8,530.1 558.8,530.4 559.8,530.7 560.9,530.9 561.9,531.2 563.0,531.4 564.0,531.7 565.0,532.8 566.0,533.8 567.0,534.9 568.0,536.0 569.0,537.0 570.0,538.1 571.0,539.2 572.0,540.3 573.0,541.3 574.0,542.4 575.2,548.3 576.4,554.1 577.6,560.0 578.6,562.0 579.6,564.0 580.6,566.0 581.6,568.0 582.6,570.0 583.6,571.9 584.6,573.9 585.6,575.9 586.6,577.9 587.6,579.9 588.7,581.2 589.8,582.4 590.8,583.7 591.9,585.0 593.0,586.3 594.1,587.5 595.2,588.8 596.3,590.1 597.3,591.4 598.4,592.6 599.5,593.9 600.5,594.9 601.6,595.9 602.6,597.1 603.7,597.9 604.7,599.1 605.8,600.1 606.8,601.0 607.9,602.3 608.9,603.0 610.0,604.3 611.0,605.0 612.1,606.0 613.1,607.4 614.2,608.9 615.2,609.1 616.3,610.2 617.3,611.8 618.4,613.4 619.4,613.9 620.4,614.5 621.4,616.5 622.4,615.6 623.4,618.1 624.4,617.9 625.4,618.5 626.4,619.3 627.4,620.7 628.4,622.8 629.4,622.1 630.4,624.1 631.4,625.1 632.4,625.3 633.4,626.8 634.4,623.6 635.4,621.8 636.4,620.5 637.4,620.3 638.4,620.0 639.5,620.1 640.5,621.5 641.6,621.6 642.6,621.6 643.6,623.8 644.7,623.9 645.7,622.9 646.8,624.5 647.8,624.9 648.8,626.6 649.9,626.6 650.9,625.6 652.0,628.5 653.0,626.0 654.1,627.6 655.1,629.2 656.1,627.7 657.2,629.3 658.2,628.3 659.3,631.0 660.3,631.8 661.3,631.6 662.3,633.1 663.3,631.7 664.3,633.5 665.3,633.6 666.3,634.0 667.3,634.1 668.3,635.9 669.3,636.7 670.3,635.6 671.3,636.7 672.3,635.1 673.3,637.8 674.3,638.1 675.3,639.7 676.3,639.6 677.3,638.3 678.4,639.1 679.4,640.5 680.4,638.8 681.4,640.8 682.4,640.2 683.4,640.4 684.4,640.7 685.4,643.9 686.4,641.8 687.4,642.7 688.4,643.8 689.4,646.3 690.4,643.4 691.4,645.4 692.4,646.4 693.4,648.4 694.4,648.6 695.4,649.3 696.4,647.0 697.4,648.1 698.4,648.3 699.4,651.4 700.4,652.3 701.4,648.6 702.4,649.2 703.4,649.9 704.5,650.4 705.5,652.2 706.5,653.3 707.5,651.9 708.5,650.9 709.5,653.7 710.5,653.9 711.5,655.6 712.5,658.4 713.5,657.3 714.5,656.7 715.5,657.8 716.5,658.7 717.5,655.1 718.5,661.1 719.5,660.8 720.5,662.0 721.5,661.9 722.6,659.6 723.6,660.1 724.6,658.5 725.6,662.8 726.6,659.1 727.6,659.6 728.6,661.1 729.6,661.2 730.6,663.0 731.6,661.3 732.6,661.4 733.6,663.1 734.6,663.2 735.6,665.8 736.6,663.6 737.6,671.1 738.6,669.5 739.6,666.2 740.6,667.6 741.6,668.9 742.6,669.6 743.6,668.0 744.6,675.0 745.6,676.8 746.6,672.6 747.6,673.4 748.7,670.2 749.7,670.9 750.7,673.7 751.7,673.5 752.7,679.4 753.7,673.5 754.7,672.7 755.7,682.4 756.7,678.7 757.7,675.4 758.7,680.0 759.7,675.2 760.7,680.9 761.7,686.2 762.7,685.6 763.7,684.4 764.7,680.3 765.7,681.9 766.7,680.1 767.7,687.2 768.7,684.9 769.7,688.1 770.8,683.5 771.8,682.6 772.8,689.7 773.8,692.0 774.8,691.0 775.8,690.8 776.8,691.4 777.8,690.9 778.9,685.3 779.9,689.1 780.9,687.6 781.9,684.1 782.9,684.4 783.9,687.8 784.9,688.0 785.9,693.6 786.9,697.2 788.0,691.4 789.0,697.9 790.0,698.9 791.0,698.9 792.0,691.9 793.0,690.4 794.0,690.7 795.1,690.6 796.1,691.0 797.1,696.7 798.1,700.0 799.1,700.0 800.2,695.7 801.2,698.2 802.2,700.0 803.2,691.4 804.3,699.2 805.3,700.0 806.3,700.0 807.3,700.0 808.3,697.9 809.4,694.2 810.4,700.0 811.4,696.8" fill="none" stroke="#008000" stroke-width="1.2"/><polyline points="343.0,516.5 344.0,516.5 345.0,516.5 346.0,516.4 347.0,516.4 348.0,516.4 349.0,516.4 350.0,516.4 351.0,516.4 352.0,516.3 353.0,516.3 354.0,516.3 355.0,516.3 356.0,516.3 357.0,516.3 358.0,516.2 359.0,516.2 360.0,516.2 361.0,516.2 362.0,516.2 363.0,516.2 364.0,516.1 365.0,516.1 366.0,516.1 367.0,516.1 368.0,516.1 369.0,516.1 370.0,516.0 371.0,516.0 372.0,516.0 373.0,516.0 374.0,516.0 375.0,516.0 376.0,515.9 377.0,515.9 378.0,515.9 379.0,515.9 380.0,515.9 381.0,515.9 382.0,515.8 383.0,515.8 384.0,515.8 385.0,515.8 386.0,515.8 387.0,515.8 388.0,515.7 389.0,515.7 390.0,515.7 391.0,515.7 392.0,515.7 393.0,515.7 394.0,515.6 395.0,515.6 396.0,515.6 397.0,515.6 398.0,515.6 399.0,515.6 400.0,515.5 401.0,515.5 402.0,515.5 403.0,515.2 404.0,515.0 405.1,514.7 406.1,514.5 407.1,514.2 408.1,513.9 409.1,513.7 410.2,513.4 411.2,513.2 412.2,512.9 413.2,512.6 414.2,512.4 415.3,512.1 416.3,511.9 417.3,511.6 418.3,511.3 419.3,511.1 420.4,510.8 421.4,510.6 422.4,510.3 423.4,510.0 424.4,509.8 425.5,509.5 426.5,509.3 427.5,509.0 428.5,508.7 429.5,508.5 430.6,508.2 431.6,508.0 432.6,507.7 433.6,507.4 434.6,507.2 435.7,506.9 436.7,506.7 437.7,506.4 438.7,506.6 439.8,506.8 440.8,507.0 441.8,507.2 442.8,507.5 443.9,507.7 444.9,507.9 445.9,508.1 446.9,508.3 447.9,508.5 449.0,508.7 450.0,508.9 451.0,509.2 452.1,509.4 453.1,509.6 454.1,509.8 455.1,510.0 456.1,510.2 457.2,510.4 458.2,510.6 459.2,510.9 460.2,511.1 461.3,511.3 462.3,511.5 463.4,512.9 464.4,514.3 465.4,515.7 466.5,517.1 467.6,518.5 468.6,519.9 469.6,521.3 470.7,522.7 471.8,524.1 472.8,525.5 473.9,526.9 474.9,528.3 475.9,529.7 477.0,531.1 478.1,532.5 479.1,533.9 480.1,535.3 481.2,536.7 482.3,538.7 483.3,540.6 484.4,542.6 485.4,544.5 486.5,546.5 487.5,548.4 488.6,550.4 489.7,552.3 490.7,554.2 491.8,556.2 492.8,558.1 493.9,560.1 494.9,562.0 496.0,564.0 497.1,565.3 498.3,566.7 499.4,568.0 500.6,569.3 501.8,570.7 502.9,572.0 504.0,573.1 505.0,574.1 506.1,575.2 507.1,576.2 508.2,577.3 509.2,578.3 510.3,579.4 511.3,580.5 512.4,581.5 513.5,582.6 514.5,583.6 515.6,584.7 516.6,585.7 517.7,586.8 518.7,587.8 519.8,588.9 520.8,589.4 521.8,589.9 522.8,590.4 523.8,590.9 524.8,591.4 525.8,591.9 526.8,592.4 527.8,592.9 528.8,593.4 529.8,593.8 530.8,594.3 531.8,594.8 532.8,595.3 533.8,595.8 534.8,596.3 535.8,596.8 536.8,597.3 537.8,597.8 538.8,598.3 539.8,598.8 540.8,599.2 541.9,599.6 542.9,600.1 544.0,600.5 545.0,600.9 546.1,601.3 547.1,601.7 548.2,602.2 549.2,602.6 550.3,603.0 551.3,603.4 552.4,603.9 553.4,604.3 554.5,604.7 555.5,605.1 556.6,605.5 557.6,606.0 558.7,606.4 559.7,606.8 560.7,607.3 561.8,607.8 562.8,608.2 563.8,608.7 564.9,609.2 565.9,609.7 567.0,610.2 568.0,610.6 569.0,611.1 570.1,611.6 571.1,612.1 572.1,612.6 573.2,613.0 574.2,613.5 575.2,614.0 576.3,614.5 577.3,615.0 578.3,615.4 579.4,615.9 580.4,616.4 581.5,616.9 582.5,617.4 583.5,617.8 584.6,618.3 585.6,618.8 586.7,619.3 587.7,619.7 588.8,620.2 589.9,620.6 590.9,621.1 592.0,621.5 593.1,622.0 594.2,622.4 595.2,622.9 596.3,623.3 597.4,623.8 598.4,624.2 599.5,624.7 600.5,625.7 601.5,626.8 602.5,627.7 603.5,628.7 604.5,629.9 605.5,630.8 606.5,631.5 607.5,632.4 608.5,633.4 609.5,635.0 610.6,635.5 611.7,635.4 612.8,636.7 613.9,637.5 615.0,637.6 616.1,637.8 617.2,638.6 618.3,638.5 619.4,638.9 620.4,641.1 621.4,641.2 622.4,641.6 623.4,643.1 624.4,642.7 625.4,644.4 626.4,645.0 627.4,643.9 628.4,644.6 629.4,645.3 630.4,645.7 631.4,647.5 632.4,646.9 633.4,648.2 634.5,644.4 635.5,644.6 636.6,640.0 637.6,640.8 638.7,641.6 639.7,643.2 640.7,641.9 641.8,644.2 642.8,643.0 643.8,643.6 644.8,643.9 645.9,642.3 646.9,644.4 647.9,643.8 649.0,643.4 650.0,647.3 651.0,644.9 652.1,646.7 653.1,648.3 654.1,647.9 655.1,647.2 656.2,648.6 657.2,649.2 658.2,650.7 659.3,647.7 660.3,650.5 661.3,649.4 662.3,650.0 663.3,653.2 664.3,652.3 665.3,653.1 666.3,654.8 667.3,656.2 668.3,654.0 669.3,655.6 670.3,655.4 671.3,656.0 672.3,657.7 673.3,656.7 674.3,657.7 675.3,657.9 676.3,661.5 677.3,660.4 678.4,662.2 679.4,663.2 680.4,659.0 681.4,661.6 682.4,664.9 683.4,664.7 684.4,660.1 685.4,660.5 686.4,663.4 687.4,661.1 688.4,662.9 689.4,662.1 690.4,667.3 691.4,668.7 692.4,670.2 693.4,664.7 694.4,669.8 695.4,669.9 696.4,666.0 697.4,672.7 698.4,674.0 699.4,668.0 700.4,674.9 701.4,670.5 702.4,671.7 703.4,676.7 704.5,675.8 705.5,670.2 706.5,673.1 707.5,674.4 708.5,673.2 709.5,672.3 710.5,673.9 711.5,678.2 712.5,671.9 713.5,677.6 714.5,676.9 715.5,673.2 716.5,676.8 717.5,680.2 718.5,679.5 719.5,675.4 720.5,685.4 721.5,683.8 722.6,686.2 723.6,677.6 724.6,679.7 725.6,677.8 726.6,686.2 727.6,681.2 728.6,680.1 729.6,683.7 730.6,689.6 731.6,689.3 732.6,683.7 733.6,683.1 734.6,692.6 735.6,689.2 736.6,691.4 737.6,684.9 738.6,685.1 739.6,693.4 740.6,690.8 741.7,687.1 742.7,698.6 743.7,695.5 744.7,698.3 745.7,689.8 746.7,700.0 747.7,690.8 748.7,700.0 749.7,697.2 750.7,696.3 751.7,699.8" fill="none" stroke="#f00000" stroke-width="1.2"/><polyline points="343.0,528.0 344.0,528.0 345.0,528.0 346.0,528.0 347.0,528.0 348.0,528.1 349.0,528.1 350.0,528.1 351.0,528.1 352.0,528.1 353.0,528.1 354.0,528.1 355.0,528.1 356.0,528.2 357.0,528.2 358.0,528.2 359.0,528.2 360.0,528.2 361.0,528.2 362.0,528.2 363.0,528.2 364.0,528.3 365.0,528.3 366.0,528.3 367.0,528.3 368.0,528.3 369.0,528.3 370.0,528.3 371.0,528.4 372.0,528.4 373.0,528.4 374.0,528.4 375.0,528.4 376.0,528.4 377.0,528.4 378.0,528.4 379.0,528.5 380.0,528.5 381.0,528.5 382.0,528.5 383.0,528.5 384.0,528.5 385.0,528.5 386.0,528.5 387.0,528.5 388.0,528.6 389.0,528.6 390.0,528.6 391.0,528.6 392.0,528.6 393.0,528.6 394.0,528.6 395.0,528.6 396.0,528.7 397.0,528.7 398.0,528.7 399.0,528.7 400.0,528.7 401.0,528.7 402.0,528.7 403.0,528.8 404.0,528.8 405.0,528.8 406.0,528.8 407.0,528.8 408.0,528.8 409.0,528.8 410.0,528.8 411.0,528.9 412.0,528.9 413.0,528.9 414.0,528.9 415.0,528.9 416.0,528.9 417.0,528.9 418.0,528.9 419.0,529.0 420.0,529.0 421.0,529.0 422.0,529.0 423.0,529.0 424.0,529.0 425.0,529.0 426.0,529.0 427.0,529.0 428.0,529.1 429.0,529.1 430.0,529.1 431.0,529.1 432.0,529.1 433.0,529.1 434.0,529.1 435.0,529.1 436.0,529.2 437.0,529.2 438.0,529.2 439.0,529.2 440.0,529.2 441.0,529.2 442.0,529.2 443.0,529.2 444.0,529.3 445.0,529.3 446.0,529.3 447.0,529.3 448.0,529.3 449.0,529.3 450.0,529.3 451.0,529.4 452.0,529.4 453.0,529.4 454.0,529.4 455.0,529.4 456.0,529.4 457.0,529.4 458.0,529.4 459.0,529.5 460.0,529.5 461.0,529.5 462.0,529.5 463.0,529.5 464.0,529.2 465.0,529.0 466.0,528.7 467.0,528.4 468.0,528.1 469.0,527.9 470.0,527.6 471.0,527.3 472.0,527.0 473.0,526.8 474.0,526.5 475.0,526.2 476.0,525.9 477.0,525.6 478.0,525.4 479.0,525.1 480.0,524.8 481.0,524.5 482.0,524.3 483.0,524.0 484.0,523.8 485.0,523.6 486.0,523.4 487.0,523.2 488.0,523.0 489.0,522.8 490.0,522.6 491.0,522.4 492.0,522.2 493.0,522.0 494.0,521.8 495.0,521.6 496.0,521.4 497.0,521.2 498.0,521.0 499.0,521.0 500.0,521.1 501.1,521.1 502.1,521.2 503.1,521.2 504.1,521.3 505.1,521.3 506.2,521.4 507.2,521.4 508.2,521.5 509.2,521.5 510.2,521.6 511.3,521.6 512.3,521.7 513.3,521.7 514.3,521.8 515.3,521.8 516.4,521.9 517.4,521.9 518.4,522.0 519.4,522.0 520.4,522.1 521.5,522.1 522.5,522.2 523.5,522.2 524.5,522.7 525.6,523.1 526.6,523.6 527.6,524.1 528.6,524.6 529.7,525.0 530.7,525.5 531.7,526.0 532.8,526.5 533.8,526.9 534.8,527.4 535.8,527.9 536.9,528.3 537.9,528.8 538.9,529.3 539.9,529.8 541.0,530.2 542.0,530.7 543.1,534.0 544.2,537.2 545.2,540.5 546.3,543.7 547.4,547.0 548.5,550.2 549.5,553.5 550.6,556.7 551.7,560.0 552.7,561.5 553.7,563.0 554.7,564.5 555.7,566.0 556.7,567.5 557.7,569.0 558.7,570.5 559.7,572.0 560.7,573.3 561.8,574.5 562.8,575.8 563.9,577.0 564.9,578.3 566.0,579.5 567.0,580.8 568.1,582.1 569.1,583.3 570.2,584.6 571.2,585.8 572.3,587.1 573.3,588.4 574.4,589.6 575.4,590.9 576.5,592.1 577.5,593.4 578.6,594.6 579.6,595.9 580.6,596.7 581.7,597.5 582.7,598.3 583.8,599.0 584.8,599.8 585.9,600.6 586.9,601.4 588.0,602.2 589.0,603.0 590.1,603.7 591.1,604.5 592.2,605.3 593.2,606.1 594.3,606.9 595.3,607.7 596.4,608.4 597.4,609.2 598.5,610.0 599.5,610.8 600.5,611.3 601.6,611.7 602.6,612.1 603.7,612.7 604.7,613.1 605.7,613.5 606.8,613.9 607.8,614.3 608.9,614.9 609.9,615.4 610.9,615.9 612.0,616.8 613.0,616.8 614.0,617.5 615.1,617.5 616.1,618.2 617.2,618.2 618.2,619.0 619.2,619.0 620.3,620.7 621.3,620.9 622.4,620.7 623.4,621.7 624.4,623.2 625.4,622.1 626.4,624.2 627.4,623.9 628.4,624.7 629.4,626.1 630.4,625.6 631.4,626.5 632.4,627.5 633.4,629.0 634.4,627.6 635.5,629.5 636.5,629.6 637.5,629.9 638.6,629.6 639.6,629.9 640.6,629.3 641.7,630.1 642.7,630.3 643.7,633.1 644.8,631.9 645.8,632.0 646.8,632.2 647.9,635.3 648.9,635.8 650.0,635.6 651.0,634.8 652.0,635.1 653.1,635.7 654.1,636.8 655.1,636.2 656.2,637.7 657.2,637.5 658.2,640.3 659.3,640.8 660.3,639.9 661.3,639.3 662.3,642.3 663.3,640.5 664.3,641.2 665.3,640.3 666.3,642.2 667.3,643.1 668.3,643.7 669.3,642.9 670.3,644.7 671.3,643.0 672.3,644.6 673.3,644.3 674.3,646.2 675.3,645.0 676.3,645.4 677.3,647.2 678.4,647.3 679.4,649.6 680.4,649.8 681.4,651.4 682.4,651.5 683.4,652.3 684.4,653.7 685.4,651.5 686.4,651.7 687.4,655.9 688.4,651.6 689.4,655.4 690.4,655.5 691.4,652.4 692.4,657.7 693.4,658.5 694.4,657.4 695.4,658.6 696.4,659.6 697.4,655.8 698.4,658.8 699.4,659.1 700.4,661.9 701.4,662.2 702.4,662.9 703.4,661.7 704.5,664.4 705.5,663.4 706.5,664.0 707.5,661.1 708.5,660.1 709.5,661.4 710.5,663.6 711.5,662.1 712.5,668.2 713.5,666.6 714.5,667.6 715.5,668.1 716.5,669.1 717.5,668.0 718.5,664.5 719.5,671.6 720.5,671.7 721.5,670.1 722.6,670.9 723.6,672.5 724.6,667.8 725.6,674.2 726.6,670.4 727.6,669.3 728.6,671.5 729.6,676.2 730.6,671.9 731.6,677.5 732.6,680.3 733.6,676.3 734.7,675.8 735.7,677.3 736.7,679.9 737.7,681.3 738.7,680.4 739.7,681.3 740.8,676.0 741.8,677.3 742.8,679.0 743.8,684.7 744.8,680.6 745.8,684.0 746.8,678.6 747.9,679.6 748.9,682.5 749.9,687.5 750.9,688.4 751.9,688.8 752.9,684.9 754.0,688.1 755.0,688.1 756.0,688.7 757.0,685.1 758.0,694.9 759.1,687.1 760.1,697.0 761.1,697.1 762.1,686.3 763.2,692.3 764.2,697.3 765.2,699.8 766.3,693.7 767.3,692.0 768.3,691.7 769.4,700.0 770.4,692.7 771.4,698.1 772.4,692.8 773.5,698.4 774.5,700.0" fill="none" stroke="#ffffff" stroke-width="1.2"/><polyline points="343.0,530.0 344.0,530.0 345.0,530.0 346.0,530.0 347.0,530.0 348.0,530.1 349.0,530.1 350.0,530.1 351.0,530.1 352.1,530.1 353.1,530.1 354.1,530.1 355.1,530.1 356.1,530.2 357.1,530.2 358.1,530.2 359.1,530.2 360.1,530.2 361.1,530.2 362.1,530.2 363.1,530.2 364.1,530.3 365.1,530.3 366.1,530.3 367.1,530.3 368.1,530.3 369.2,530.3 370.2,530.3 371.2,530.4 372.2,530.4 373.2,530.4 374.2,530.4 375.2,530.4 376.2,530.4 377.2,530.4 378.2,530.4 379.2,530.5 380.2,530.5 381.2,530.5 382.2,530.5 383.2,530.5 384.2,530.5 385.2,530.5 386.3,530.5 387.3,530.6 388.3,530.6 389.3,530.6 390.3,530.6 391.3,530.6 392.3,530.6 393.3,530.6 394.3,530.6 395.3,530.6 396.3,530.7 397.3,530.7 398.3,530.7 399.3,530.7 400.3,530.7 401.3,530.7 402.3,530.7 403.4,530.8 404.4,530.8 405.4,530.8 406.4,530.8 407.4,530.8 408.4,530.8 409.4,530.8 410.4,530.8 411.4,530.9 412.4,530.9 413.4,530.9 414.4,530.9 415.4,530.9 416.4,530.9 417.4,530.9 418.4,530.9 419.4,531.0 420.5,531.0 421.5,531.0 422.5,531.0 423.5,531.0 424.5,531.0 425.5,531.0 426.5,531.0 427.5,531.1 428.5,531.1 429.5,531.1 430.5,531.1 431.5,531.1 432.5,531.1 433.5,531.1 434.5,531.1 435.5,531.1 436.5,531.2 437.6,531.2 438.6,531.2 439.6,531.2 440.6,531.2 441.6,531.2 442.6,531.2 443.6,531.2 444.6,531.3 445.6,531.3 446.6,531.3 447.6,531.3 448.6,531.3 449.6,531.3 450.6,531.3 451.6,531.4 452.6,531.4 453.6,531.4 454.7,531.4 455.7,531.4 456.7,531.4 457.7,531.4 458.7,531.4 459.7,531.5 460.7,531.5 461.7,531.5 462.7,531.5 463.7,531.5 464.7,531.5 465.7,531.5 466.7,531.5 467.7,531.6 468.7,531.6 469.7,531.6 470.7,531.6 471.8,531.6 472.8,531.6 473.8,531.6 474.8,531.6 475.8,531.7 476.8,531.7 477.8,531.7 478.8,531.7 479.8,531.7 480.8,531.5 481.8,531.2 482.9,531.0 483.9,530.8 484.9,530.5 485.9,530.3 486.9,530.1 488.0,529.8 489.0,529.6 490.0,529.4 491.0,529.1 492.1,528.9 493.1,528.7 494.1,528.4 495.1,528.2 496.1,528.0 497.2,527.7 498.2,527.5 499.2,527.3 500.2,527.0 501.2,526.8 502.3,526.6 503.3,526.3 504.3,526.1 505.3,525.9 506.4,525.6 507.4,525.4 508.4,525.2 509.4,524.9 510.4,524.7 511.5,524.5 512.5,524.2 513.5,524.0 514.5,524.1 515.5,524.1 516.6,524.2 517.6,524.3 518.6,524.3 519.6,524.4 520.7,524.5 521.7,524.6 522.7,524.6 523.7,524.7 524.7,524.8 525.8,524.8 526.8,524.9 527.8,525.0 528.8,525.0 529.8,525.1 530.9,525.2 531.9,525.3 532.9,525.3 533.9,525.4 535.0,525.5 536.0,525.5 537.0,525.6 538.0,526.2 539.0,526.8 540.0,527.4 541.0,528.0 542.0,528.5 543.1,529.1 544.1,529.7 545.1,530.3 546.1,530.9 547.1,531.5 548.1,532.1 549.1,532.7 550.1,533.3 551.1,533.9 552.2,534.5 553.2,535.0 554.2,535.6 555.2,536.2 556.2,536.8 557.2,537.4 558.3,540.2 559.3,543.0 560.4,545.9 561.5,548.7 562.5,551.5 563.6,554.4 564.6,557.2 565.7,560.0 566.8,561.8 567.8,563.5 568.9,565.3 570.0,567.0 571.0,568.8 572.1,570.6 573.2,572.3 574.3,574.1 575.3,575.9 576.4,577.6 577.5,579.4 578.5,581.1 579.6,582.9 580.6,584.0 581.7,585.1 582.7,586.2 583.8,587.3 584.8,588.4 585.9,589.5 586.9,590.6 588.0,591.7 589.0,592.8 590.1,593.9 591.1,595.0 592.2,596.1 593.2,597.2 594.3,598.3 595.3,599.4 596.4,600.5 597.4,601.6 598.5,602.7 599.5,603.8 600.5,604.6 601.6,605.5 602.6,606.3 603.7,607.3 604.7,608.1 605.8,608.7 606.8,609.9 607.9,610.5 608.9,611.0 610.0,611.8 611.0,613.0 612.1,613.8 613.1,614.5 614.2,615.1 615.2,616.2 616.3,617.0 617.3,618.6 618.4,618.1 619.4,620.2 620.4,621.4 621.4,621.2 622.4,623.7 623.4,624.4 624.4,625.9 625.4,625.7 626.4,626.9 627.4,628.0 628.4,630.5 629.4,630.6 630.4,631.1 631.4,632.3 632.4,632.9 633.4,633.3 634.5,631.3 635.5,631.4 636.6,627.5 637.6,629.9 638.7,628.1 639.7,628.4 640.7,629.6 641.8,628.9 642.8,629.8 643.8,632.2 644.8,632.3 645.9,632.4 646.9,632.1 647.9,633.4 649.0,633.8 650.0,632.8 651.0,633.8 652.1,631.8 653.1,634.5 654.1,633.9 655.1,635.2 656.2,635.2 657.2,634.3 658.2,633.9 659.3,637.2 660.3,634.8 661.3,636.5 662.3,636.6 663.3,636.9 664.3,638.9 665.3,640.2 666.3,638.3 667.3,640.2 668.3,639.4 669.3,640.8 670.3,640.7 671.3,640.4 672.3,640.8 673.3,641.5 674.3,644.7 675.3,643.6 676.3,643.0 677.3,646.3 678.4,647.3 679.4,645.4 680.4,644.5 681.4,645.2 682.4,645.2 683.4,646.9 684.4,646.2 685.4,647.4 686.4,647.9 687.4,650.0 688.4,652.1 689.4,651.9 690.4,650.7 691.4,651.2 692.4,652.3 693.4,651.9 694.4,652.2 695.4,651.1 696.4,652.8 697.4,657.3 698.4,652.7 699.4,655.4 700.4,656.7 701.4,658.6 702.4,655.0 703.4,655.8 704.5,656.1 705.5,657.5 706.5,658.2 707.5,662.0 708.5,661.8 709.5,662.5 710.5,657.1 711.5,657.6 712.5,662.7 713.5,664.5 714.5,662.0 715.5,663.2 716.5,659.4 717.5,662.7 718.5,667.2 719.5,666.9 720.5,667.6 721.5,669.0 722.6,663.8 723.6,663.1 724.6,663.9 725.6,667.3 726.6,669.0 727.6,671.6 728.6,670.3 729.6,670.1 730.6,671.6 731.6,669.6 732.6,671.0 733.6,667.1 734.6,674.2 735.6,669.9 736.6,676.6 737.6,674.7 738.6,672.2 739.6,671.1 740.6,672.8 741.6,677.0 742.6,678.2 743.6,673.1 744.6,673.3 745.6,678.3 746.6,679.5 747.6,678.1 748.7,677.0 749.7,681.4 750.7,675.9 751.7,679.4 752.7,681.7 753.7,687.6 754.7,684.8 755.7,688.0 756.7,684.2 757.7,682.1 758.7,682.8 759.7,691.4 760.7,689.1 761.7,685.1 762.7,682.4 763.7,688.5 764.7,691.1 765.7,688.7 766.7,687.3 767.8,692.7 768.8,696.4 769.8,688.4 770.9,686.5 771.9,690.8 772.9,692.3 774.0,696.2 775.0,690.6 776.1,698.7 777.1,698.5 778.1,696.0 779.2,692.6 780.2,700.0 781.2,695.1 782.3,700.0 783.3,695.0" fill="none" stroke="#0000ff" stroke-width="1.2"/><path d="M939.5 682V700" stroke="#008000" stroke-width="1"/><polyline points="343.0,701.0 344.0,701.0 345.2,701.0 346.4,701.0 347.6,701.0 349.0,701.0 350.4,701.0 351.9,701.0 353.4,701.0 355.1,701.0 356.7,701.0 358.5,701.0 360.3,701.0 362.1,701.0 364.0,701.0 365.9,701.0 367.9,701.0 370.0,701.0 372.1,701.0 374.2,701.0 376.3,701.0 378.5,701.0 380.8,701.0 383.0,701.0 385.3,701.0 387.7,701.0 390.0,701.0 392.4,701.0 394.8,701.0 397.2,701.0 399.6,701.0 402.1,701.0 404.6,701.0 407.0,701.0 409.5,701.0 412.0,701.0 414.5,701.0 417.0,701.0 419.5,701.0 422.0,701.0 424.5,701.0 427.0,701.0 429.4,701.0 431.9,701.0 434.4,701.0 436.8,701.0 439.2,701.0 441.6,701.0 444.0,701.0 446.3,701.0 448.7,701.0 451.0,701.0 453.2,701.0 455.5,701.0 457.7,701.0 459.8,701.0 462.0,701.0 464.0,701.0 466.1,701.0 468.1,701.0 470.0,701.0 471.9,701.0 473.8,701.0 475.6,701.0 477.3,701.0 479.0,701.0 480.6,701.0 482.1,701.0 483.6,701.0 485.0,701.0 486.4,701.0 487.7,701.0 488.9,701.0 490.0,701.0 499.7,701.0 503.8,701.1 504.1,701.2 502.6,701.2 501.2,701.1 502.0,700.8 503.8,700.5 505.5,700.3 507.3,700.0 509.2,699.6 511.3,699.1 513.7,698.4 516.5,697.6 519.8,696.5 521.4,696.0 523.1,695.4 524.9,694.8 526.8,694.1 528.7,693.4 530.8,692.7 532.9,692.0 535.0,691.2 537.3,690.4 539.5,689.6 541.8,688.7 544.1,687.8 546.4,687.0 548.6,686.1 550.9,685.2 553.2,684.3 555.4,683.3 557.6,682.4 559.7,681.5 561.8,680.6 563.9,679.6 566.0,678.7 568.1,677.7 570.2,676.7 572.3,675.6 574.4,674.6 576.5,673.6 578.6,672.5 580.6,671.4 582.7,670.4 584.8,669.3 586.9,668.2 589.0,667.1 591.1,666.0 593.2,664.9 595.3,663.8 597.4,662.7 599.5,661.6 601.6,660.5 603.7,659.4 605.8,658.3 607.9,657.2 610.0,656.1 612.1,655.0 614.2,653.9 616.3,652.8 618.4,651.7 620.4,650.6 622.5,649.4 624.6,648.3 626.7,647.1 628.8,645.9 631.0,644.7 633.1,643.5 635.2,642.2 637.3,641.0 639.4,639.7 641.4,638.5 643.4,637.2 645.5,635.9 647.5,634.5 649.6,633.2 651.6,631.8 653.7,630.4 655.7,629.1 657.8,627.6 659.8,626.2 661.9,624.8 663.9,623.4 665.9,622.0 668.0,620.6 670.0,619.2 672.0,617.8 674.0,616.4 676.0,615.0 678.0,613.6 680.0,612.3 682.1,610.9 684.1,609.5 686.2,608.1 688.2,606.7 690.2,605.4 692.2,604.0 694.2,602.6 696.2,601.3 698.2,599.9 700.2,598.5 702.2,597.2 704.2,595.9 706.2,594.5 708.1,593.2 710.1,591.9 712.1,590.5 714.1,589.2 716.1,587.9 718.1,586.6 720.1,585.3 722.1,584.0 724.1,582.7 726.1,581.4 728.1,580.1 730.1,578.8 732.1,577.5 734.1,576.2 736.1,574.9 738.1,573.6 740.1,572.4 742.1,571.1 744.1,569.9 746.1,568.7 748.1,567.5 750.1,566.3 752.1,565.1 754.1,563.9 756.1,562.8 758.1,561.7 760.1,560.6 762.1,559.5 764.1,558.4 766.1,557.4 768.1,556.3 770.1,555.3 772.1,554.3 774.1,553.3 776.1,552.3 778.2,551.3 780.2,550.3 782.2,549.4 784.2,548.4 786.2,547.5 788.2,546.5 790.2,545.6 792.2,544.7 794.2,543.8 796.2,542.9 798.2,542.0 800.2,541.1 802.2,540.3 804.2,539.4 806.2,538.6 808.2,537.8 810.2,536.9 812.3,536.1 814.3,535.3 816.3,534.5 818.3,533.8 820.3,533.0 822.3,532.2 824.3,531.5 826.3,530.7 828.3,530.0 830.3,529.2 832.3,528.5 834.3,527.8 836.4,527.1 838.5,526.3 840.6,525.6 842.8,524.9 845.0,524.2 847.1,523.5 849.3,522.8 851.4,522.1 853.5,521.5 855.6,520.8 857.7,520.2 859.7,519.6 861.7,519.0 863.5,518.4 865.4,517.8 867.1,517.2 868.7,516.7 870.3,516.2 873.3,515.2 875.9,514.3 878.3,513.4 880.4,512.6 882.3,511.9 884.2,511.2 885.9,510.6 887.6,510.0 889.4,509.5 891.7,508.8 893.4,508.2 894.9,507.7 896.7,507.3 899.2,507.0 902.7,506.7 904.2,506.6 906.0,506.6 908.0,506.5 910.1,506.5 912.4,506.5 914.7,506.5 917.2,506.5 919.7,506.5 922.2,506.5 924.7,506.5 927.1,506.6 929.4,506.6 931.7,506.6 933.8,506.6 935.7,506.7 937.4,506.7 938.8,506.7 940.0,506.7" fill="none" stroke="#d8d800" stroke-width="1.2"/><path d="M502 506V704" stroke="#ffff00" stroke-width="2.2" stroke-dasharray="8 4"/><path d="M695 506V704" stroke="#ffff00" stroke-width="2.2" stroke-dasharray="8 4"/><path d="M904 506V704" stroke="#ffff00" stroke-width="2.2" stroke-dasharray="8 4"/></svg>
<div class="t" style="left:517px;top:643px;color:#fff;transform-origin:0 0;transform:rotate(90deg);font-size:11px;line-height:12px">Black Level</div>
<div class="t" style="left:710px;top:574px;color:#fff;transform-origin:0 0;transform:rotate(90deg);font-size:11px;line-height:12px">Mid Level</div>
<div class="t" style="left:899px;top:506px;color:#fff;transform-origin:0 0;transform:rotate(90deg);font-size:11px;line-height:12px">White Level</div>
<div class="a" style="left:730px;top:511px;width:14px;height:14px;border:1px solid #505050"></div>
<svg class="a" style="left:730px;top:511px" width="14" height="14"><path d="M3 7.2L5.8 10.2L11 3.5" stroke="#a8641c" stroke-width="1.8" fill="none"/></svg>
<div class="t" style="left:749px;top:510px;font-size:11px;color:#7d8a96">Logarithmic Horizontal Axis</div>
<div class="a" style="left:887px;top:507px;width:25px;height:25px;border:1px solid #3c3c3c"></div>
<div class="a" style="left:914px;top:507px;width:25px;height:25px;border:1px solid #3c3c3c"></div>
<svg class="a" style="left:890px;top:510px" width="19" height="19" viewBox="0 0 19 19"><path d="M10.5 1.5L2.5 11H8.5L6.5 17.5L16 7.5H10Z" fill="none" stroke="#9a5a14" stroke-width="1.5" stroke-linejoin="round"/></svg>
<svg class="a" style="left:917px;top:510px" width="19" height="19" viewBox="0 0 19 19"><path d="M5.2 7.5A5.5 5.5 0 1 1 4.5 12" fill="none" stroke="#9a5a14" stroke-width="1.6"/><path d="M2.5 10.5L5.5 12.8L7.8 9.5" fill="none" stroke="#9a5a14" stroke-width="1.4"/></svg>
<div class="a" style="left:940px;top:506px;width:18px;height:174px;background:#ff0000"></div>
<div class="a" style="left:958px;top:506px;width:18px;height:174px;background:#008000"></div>
<div class="a" style="left:976px;top:506px;width:18px;height:174px;background:#0000ff"></div>
<div class="a" style="left:994px;top:506px;width:18px;height:174px;background:linear-gradient(to right,#ff2020 0,#ff2020 6px,#008000 6px,#008000 13px,#2020ff 13px)"></div>
<div class="a" style="left:994px;top:506px;width:18px;height:174px;background:linear-gradient(to bottom,rgba(128,128,128,0) 0,rgba(128,128,128,0) 25%,#808080 100%)"></div>
<div class="a" style="left:947px;top:511px;width:4px;height:164px;background:#e8e8e8"></div>
<div class="a" style="left:940px;top:588px;width:18px;height:11px;background:#e8e8e8;border:1px solid #c8c8c8"></div>
<div class="a" style="left:965px;top:511px;width:4px;height:164px;background:#e8e8e8"></div>
<div class="a" style="left:958px;top:636px;width:18px;height:11px;background:#e8e8e8;border:1px solid #c8c8c8"></div>
<div class="a" style="left:983px;top:511px;width:4px;height:164px;background:#e8e8e8"></div>
<div class="a" style="left:976px;top:601px;width:18px;height:11px;background:#e8e8e8;border:1px solid #c8c8c8"></div>
<div class="a" style="left:1001px;top:511px;width:4px;height:164px;background:#e8e8e8"></div>
<div class="a" style="left:994px;top:632px;width:18px;height:11px;background:#e8e8e8;border:1px solid #c8c8c8"></div>
<div class="a" style="left:943px;top:681px;width:20px;height:20px;border:1px solid #6a6a6a"></div>
<div class="a" style="left:965px;top:681px;width:20px;height:20px;border:1px solid #6a6a6a"></div>
<div class="a" style="left:987px;top:681px;width:20px;height:20px;border:1px solid #6a6a6a"></div>
<svg class="a" style="left:945px;top:683px" width="16" height="16" viewBox="0 0 19 19"><path d="M10.5 1.5L2.5 11H8.5L6.5 17.5L16 7.5H10Z" fill="none" stroke="#ff8c00" stroke-width="1.7" stroke-linejoin="round"/></svg>
<svg class="a" style="left:967px;top:683px" width="16" height="16" viewBox="0 0 16 16"><path d="M8 1.5Q9 7 14.5 8Q9 9 8 14.5Q7 9 1.5 8Q7 7 8 1.5Z" fill="#ff8c00"/></svg>
<svg class="a" style="left:989px;top:683px" width="16" height="16" viewBox="0 0 19 19"><path d="M5.2 7.5A5.5 5.5 0 1 1 4.5 12" fill="none" stroke="#ff8c00" stroke-width="1.8"/><path d="M2.5 10.5L5.5 12.8L7.8 9.5" fill="none" stroke="#ff8c00" stroke-width="1.6"/></svg>


<!-- status bar -->
<div class="bx" style="left:1px;top:708px;width:429px;height:17px"></div>
<div class="bx" style="left:431px;top:708px;width:199px;height:17px;overflow:hidden"><span class="t" style="left:3px;top:1px">Memory: 2 of 149 frame buffers in use</span></div>
<div class="bx" style="left:631px;top:708px;width:199px;height:17px"></div>
<div class="t" style="left:5px;top:710px">Previewing : 1482 frames (0 dropped) in 0:22:05,9, 0,9 fps</div>
<div class="t" style="left:635px;top:710px">110 Stacked, 1 Ignored, 86,99s</div>
</body></html>
